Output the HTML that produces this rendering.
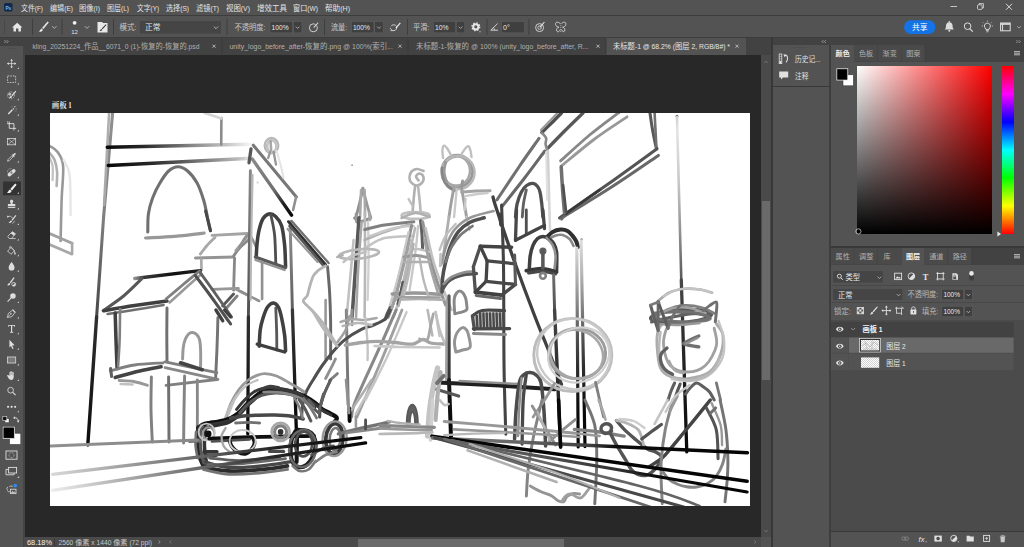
<!DOCTYPE html>
<html lang="zh"><head><meta charset="utf-8"><title>Photoshop</title>
<style>
html,body{margin:0;padding:0;background:#535353;}
body{width:1024px;height:547px;position:relative;overflow:hidden;font-family:"Liberation Sans",sans-serif;}
#ui div{position:absolute;}
svg{position:absolute;left:0;top:0;}
</style></head><body>
<div id="ui">
<div style="left:0px;top:0px;width:1024px;height:547px;background:#535353;"></div>
<div style="left:0px;top:15px;width:1024px;height:1px;background:#3d3d3d;"></div>
<div style="left:0px;top:37px;width:1024px;height:1px;background:#3d3d3d;"></div>
<div style="left:24px;top:38px;width:747px;height:17px;background:#424242;"></div>
<div style="left:24px;top:55px;width:737px;height:482px;background:#282828;"></div>
<div style="left:0px;top:38px;width:24px;height:8px;background:#424242;"></div>
<div style="left:23px;top:46px;width:2px;height:501px;background:#454545;"></div>
<div style="left:24px;top:537px;width:747px;height:10px;background:#4a4a4a;"></div>
<div style="left:761px;top:55px;width:10px;height:482px;background:#4a4a4a;"></div>
<div style="left:761.5px;top:201px;width:8px;height:179px;background:#6a6a6a;"></div>
<div style="left:357.5px;top:538.5px;width:206px;height:8px;background:#6a6a6a;"></div>
<div style="left:770.5px;top:38px;width:2.5px;height:509px;background:#383838;"></div>
<div style="left:773px;top:38px;width:56px;height:7px;background:#424242;"></div>
<div style="left:773px;top:45px;width:56px;height:41px;background:#535353;"></div>
<div style="left:773px;top:86px;width:56px;height:1px;background:#383838;"></div>
<div style="left:773px;top:87px;width:56px;height:460px;background:#535353;"></div>
<div style="left:829.2px;top:45px;width:1.7px;height:502px;background:#3e3e3e;"></div>
<div style="left:829px;top:38px;width:195px;height:7px;background:#424242;"></div>
<div style="left:831px;top:45px;width:193px;height:17px;background:#424242;"></div>
<div style="left:831px;top:62px;width:193px;height:184px;background:#535353;"></div>
<div style="left:831px;top:246px;width:193px;height:2px;background:#383838;"></div>
<div style="left:831px;top:248px;width:193px;height:17px;background:#424242;"></div>
<div style="left:831px;top:265px;width:193px;height:56px;background:#535353;"></div>
<div style="left:831px;top:284.5px;width:193px;height:1px;background:#484848;"></div>
<div style="left:831px;top:301.5px;width:193px;height:1px;background:#484848;"></div>
<div style="left:831px;top:320px;width:193px;height:211px;background:#4b4b4b;"></div>
<div style="left:831px;top:531px;width:193px;height:1px;background:#383838;"></div>
<div style="left:831px;top:532px;width:193px;height:15px;background:#535353;"></div>
<div style="left:761px;top:537px;width:10px;height:10px;background:#535353;"></div>
</div>
<div id="artboard" style="position:absolute;left:50.4px;top:113px;width:699.4px;height:393.2px;background:#fff;overflow:hidden">
<svg width="699.4" height="393.2" viewBox="50.4 113 699.4 393.2" fill="none" stroke-linecap="round" stroke-linejoin="round" style="filter:blur(0.45px)"><defs><linearGradient id="sg0" gradientUnits="userSpaceOnUse" x1="113" y1="113" x2="104" y2="217"><stop offset="0" stop-color="#909090"/><stop offset="1" stop-color="#808080"/></linearGradient><linearGradient id="sg1" gradientUnits="userSpaceOnUse" x1="109.5" y1="113" x2="104.5" y2="205"><stop offset="0" stop-color="#b0b0b0"/><stop offset="1" stop-color="#a8a8a8"/></linearGradient><linearGradient id="sg2" gradientUnits="userSpaceOnUse" x1="104" y1="217" x2="97" y2="317"><stop offset="0" stop-color="#808080"/><stop offset="1" stop-color="#484848"/></linearGradient><linearGradient id="sg3" gradientUnits="userSpaceOnUse" x1="97" y1="317" x2="88.2" y2="445"><stop offset="0" stop-color="#303030"/><stop offset="1" stop-color="#0c0c0c"/></linearGradient><linearGradient id="sg4" gradientUnits="userSpaceOnUse" x1="107.7" y1="147.3" x2="250" y2="144.2"><stop offset="0" stop-color="#080808"/><stop offset="0.25" stop-color="#282828"/><stop offset="0.6" stop-color="#888888"/><stop offset="0.85" stop-color="#c8c8c8"/><stop offset="1" stop-color="#f4f4f4"/></linearGradient><linearGradient id="sg5" gradientUnits="userSpaceOnUse" x1="108.7" y1="165.5" x2="252" y2="158.2"><stop offset="0" stop-color="#080808"/><stop offset="0.3" stop-color="#282828"/><stop offset="0.65" stop-color="#787878"/><stop offset="0.9" stop-color="#b8b8b8"/><stop offset="1" stop-color="#e8e8e8"/></linearGradient><linearGradient id="sg6" gradientUnits="userSpaceOnUse" x1="252.7" y1="159" x2="292" y2="215.2"><stop offset="0" stop-color="#888888"/><stop offset="0.55" stop-color="#707070"/><stop offset="0.8" stop-color="#202020"/><stop offset="1" stop-color="#080808"/></linearGradient><linearGradient id="sg7" gradientUnits="userSpaceOnUse" x1="135.1" y1="278.5" x2="200.7" y2="270.7"><stop offset="0" stop-color="#909090"/><stop offset="0.15" stop-color="#383838"/><stop offset="0.6" stop-color="#101010"/><stop offset="1" stop-color="#202020"/></linearGradient><linearGradient id="sg8" gradientUnits="userSpaceOnUse" x1="250.8" y1="170.7" x2="248.8" y2="317"><stop offset="0" stop-color="#888888"/><stop offset="1" stop-color="#505050"/></linearGradient><linearGradient id="sg9" gradientUnits="userSpaceOnUse" x1="248.8" y1="317" x2="248.2" y2="433.8"><stop offset="0" stop-color="#303030"/><stop offset="1" stop-color="#060606"/></linearGradient><linearGradient id="sg10" gradientUnits="userSpaceOnUse" x1="290.5" y1="221.7" x2="292.8" y2="310"><stop offset="0" stop-color="#909090"/><stop offset="1" stop-color="#606060"/></linearGradient><linearGradient id="sg11" gradientUnits="userSpaceOnUse" x1="292.8" y1="310" x2="296.7" y2="429"><stop offset="0" stop-color="#383838"/><stop offset="1" stop-color="#060606"/></linearGradient><linearGradient id="sg12" gradientUnits="userSpaceOnUse" x1="359.4" y1="217.8" x2="352.5" y2="317"><stop offset="0" stop-color="#585858"/><stop offset="1" stop-color="#585858"/></linearGradient><linearGradient id="sg13" gradientUnits="userSpaceOnUse" x1="346.7" y1="310" x2="348.6" y2="405"><stop offset="0" stop-color="#888888"/><stop offset="1" stop-color="#707070"/></linearGradient><linearGradient id="sg14" gradientUnits="userSpaceOnUse" x1="548.2" y1="151" x2="550.4" y2="230"><stop offset="0" stop-color="#cccccc"/><stop offset="1" stop-color="#d8d8d8"/></linearGradient><linearGradient id="sg15" gradientUnits="userSpaceOnUse" x1="677.4" y1="117" x2="681.7" y2="280"><stop offset="0" stop-color="#d0d0d0"/><stop offset="0.08" stop-color="#e4e4e4"/><stop offset="0.4" stop-color="#c8c8c8"/><stop offset="0.75" stop-color="#888888"/><stop offset="1" stop-color="#585858"/></linearGradient><linearGradient id="sg16" gradientUnits="userSpaceOnUse" x1="681.7" y1="280" x2="687.2" y2="451.9"><stop offset="0" stop-color="#484848"/><stop offset="0.5" stop-color="#202020"/><stop offset="1" stop-color="#080808"/></linearGradient><linearGradient id="sg17" gradientUnits="userSpaceOnUse" x1="577.2" y1="248" x2="578.6" y2="447"><stop offset="0" stop-color="#d8d8d8"/><stop offset="0.15" stop-color="#b0b0b0"/><stop offset="0.3" stop-color="#808080"/><stop offset="0.45" stop-color="#505050"/><stop offset="0.6" stop-color="#2c2c2c"/><stop offset="0.8" stop-color="#0c0c0c"/><stop offset="1" stop-color="#040404"/></linearGradient><linearGradient id="sg18" gradientUnits="userSpaceOnUse" x1="581.5" y1="242" x2="585.4" y2="446.6"><stop offset="0" stop-color="#dcdcdc"/><stop offset="0.15" stop-color="#b8b8b8"/><stop offset="0.3" stop-color="#888888"/><stop offset="0.45" stop-color="#585858"/><stop offset="0.6" stop-color="#303030"/><stop offset="0.8" stop-color="#0c0c0c"/><stop offset="1" stop-color="#040404"/></linearGradient><linearGradient id="sg19" gradientUnits="userSpaceOnUse" x1="554" y1="275" x2="555" y2="310"><stop offset="0" stop-color="#707070"/><stop offset="1" stop-color="#505050"/></linearGradient><linearGradient id="sg20" gradientUnits="userSpaceOnUse" x1="555" y1="310" x2="561" y2="447"><stop offset="0" stop-color="#444444"/><stop offset="0.6" stop-color="#282828"/><stop offset="1" stop-color="#080808"/></linearGradient><linearGradient id="sg21" gradientUnits="userSpaceOnUse" x1="449.4" y1="296" x2="449.4" y2="380"><stop offset="0" stop-color="#585858"/><stop offset="1" stop-color="#303030"/></linearGradient><linearGradient id="sg22" gradientUnits="userSpaceOnUse" x1="449.4" y1="380" x2="451.4" y2="437"><stop offset="0" stop-color="#181818"/><stop offset="1" stop-color="#060606"/></linearGradient><linearGradient id="sg23" gradientUnits="userSpaceOnUse" x1="51" y1="446" x2="198" y2="440"><stop offset="0" stop-color="#909090"/><stop offset="1" stop-color="#888888"/></linearGradient><linearGradient id="sg24" gradientUnits="userSpaceOnUse" x1="53" y1="474.4" x2="361.2" y2="437.7"><stop offset="0" stop-color="#d8d8d8"/><stop offset="0.3" stop-color="#909090"/><stop offset="0.5" stop-color="#606060"/><stop offset="0.72" stop-color="#242424"/><stop offset="1" stop-color="#060606"/></linearGradient><linearGradient id="sg25" gradientUnits="userSpaceOnUse" x1="53" y1="490.4" x2="366" y2="443"><stop offset="0" stop-color="#ececec"/><stop offset="0.25" stop-color="#a8a8a8"/><stop offset="0.5" stop-color="#606060"/><stop offset="0.72" stop-color="#242424"/><stop offset="1" stop-color="#060606"/></linearGradient><linearGradient id="sg26" gradientUnits="userSpaceOnUse" x1="433" y1="438" x2="747.9" y2="452.8"><stop offset="0" stop-color="#888888"/><stop offset="0.3" stop-color="#606060"/><stop offset="0.5" stop-color="#404040"/><stop offset="0.58" stop-color="#0c0c0c"/><stop offset="1" stop-color="#040404"/></linearGradient><linearGradient id="sg27" gradientUnits="userSpaceOnUse" x1="432.4" y1="436.2" x2="747.5" y2="481.2"><stop offset="0" stop-color="#040404"/><stop offset="1" stop-color="#040404"/></linearGradient><linearGradient id="sg28" gradientUnits="userSpaceOnUse" x1="433" y1="437.6" x2="747.5" y2="492"><stop offset="0" stop-color="#707070"/><stop offset="0.4" stop-color="#4c4c4c"/><stop offset="0.6" stop-color="#303030"/><stop offset="0.72" stop-color="#080808"/><stop offset="1" stop-color="#040404"/></linearGradient></defs><path d="M50.0 146.0C51.3 147.0 55.8 148.7 58.0 152.0C60.2 155.3 62.8 158.0 63.5 166.0C64.2 174.0 62.4 187.5 62.0 200.0C61.6 212.5 61.2 234.2 61.0 241.0" stroke="#989898" stroke-width="2.60"/>
<path d="M50.0 153.0C50.8 154.2 53.8 156.8 55.0 160.0C56.2 163.2 57.2 167.7 57.5 172.0C57.8 176.3 57.1 183.7 57.0 186.0" stroke="#b0b0b0" stroke-width="2.60"/>
<path d="M50.0 158.0C50.5 159.3 52.5 162.3 53.0 166.0C53.5 169.7 53.0 177.7 53.0 180.0" stroke="#c4c4c4" stroke-width="2.36"/>
<path d="M64.0 160.0C65.0 162.5 68.8 165.8 70.0 175.0C71.2 184.2 70.8 208.3 71.0 215.0" stroke="#e6e6e6" stroke-width="2.36"/>
<path d="M50.0 233.5L72.5 243.3" stroke="#a0a0a0" stroke-width="2.83"/>
<path d="M50.0 244.5L72.0 254.0" stroke="#a8a8a8" stroke-width="2.83"/>
<path d="M72.5 243.0L72.5 254.0" stroke="#a8a8a8" stroke-width="2.60"/>
<path d="M113.0 113.0L104.0 217.0" stroke="url(#sg0)" stroke-width="3.07"/>
<path d="M109.5 113.0L104.5 205.0" stroke="url(#sg1)" stroke-width="2.60"/>
<path d="M104.0 217.0L97.0 317.0" stroke="url(#sg2)" stroke-width="3.07"/>
<path d="M97.0 317.0L88.2 445.0" stroke="url(#sg3)" stroke-width="3.42"/>
<path d="M107.7 147.3L250.0 144.2" stroke="url(#sg4)" stroke-width="3.54"/>
<path d="M108.7 165.5L252.0 158.2" stroke="url(#sg5)" stroke-width="3.54"/>
<path d="M221.8 118.0L221.6 144.6" stroke="#8c8c8c" stroke-width="2.60"/>
<path d="M205.0 113.0L222.0 118.4" stroke="#d4d4d4" stroke-width="2.60"/>
<path d="M148.2 232.0C148.3 229.0 148.0 219.7 148.8 214.0C149.6 208.3 151.1 203.1 153.0 198.0C154.9 192.9 157.3 188.0 160.0 183.5C162.7 179.0 165.9 173.8 169.0 171.0C172.1 168.2 175.3 166.8 178.5 166.8C181.7 166.8 184.8 168.3 188.0 171.0C191.2 173.7 194.8 178.2 197.5 183.0C200.2 187.8 202.2 194.2 204.0 200.0C205.8 205.8 206.9 212.9 208.0 218.0C209.1 223.1 210.3 228.4 210.8 230.5" stroke="#707070" stroke-width="3.07"/>
<path d="M206.0 211.0L210.9 230.8" stroke="#484848" stroke-width="3.07"/>
<path d="M145.9 238.0C150.8 237.7 165.2 237.2 175.0 236.4C184.8 235.6 199.7 233.7 204.6 233.1" stroke="#989898" stroke-width="3.07"/>
<path d="M253.7 145.2L296.8 197.0" stroke="#787878" stroke-width="3.07"/>
<path d="M252.7 159.0L292.0 215.2" stroke="url(#sg6)" stroke-width="3.30"/>
<path d="M296.5 197.0L293.5 210.0" stroke="#909090" stroke-width="2.60"/>
<path d="M251.4 149.0L249.4 162.8" stroke="#585858" stroke-width="3.30"/>
<ellipse cx="271.9" cy="145.6" rx="6.8" ry="7.6" stroke="#b8b8b8" stroke-width="2.36"/>
<ellipse cx="272.2" cy="146.4" rx="4.6" ry="6" stroke="#c4c4c4" stroke-width="2.60"/>
<path d="M271.0 141.0L271.5 150.0" stroke="#a8a8a8" stroke-width="2.60"/>
<path d="M270.5 152.0L268.6 158.0" stroke="#989898" stroke-width="2.36"/>
<path d="M274.0 152.0L276.4 164.5" stroke="#989898" stroke-width="2.36"/>
<path d="M277.0 151.0C277.7 153.3 279.8 160.5 281.0 165.0C282.2 169.5 283.5 175.8 284.0 178.0" stroke="#e4e4e4" stroke-width="2.12"/>
<circle cx="352.5" cy="165.2" r="0.9" fill="#a0a0a0" stroke="none"/>
<circle cx="258" cy="182.5" r="1.2" fill="#e0e0e0" stroke="none"/>
<path d="M212.4 235.4L247.7 233.5" stroke="#a4a4a4" stroke-width="2.83"/>
<path d="M215.4 237.4C214.0 238.8 209.4 243.2 207.0 246.0C204.6 248.8 201.8 252.7 200.7 254.0" stroke="#a8a8a8" stroke-width="2.83"/>
<path d="M195.8 258.0L234.0 257.0" stroke="#949494" stroke-width="2.83"/>
<path d="M250.5 238.5C248.8 240.1 242.8 245.1 240.0 248.0C237.2 250.9 235.0 254.7 234.0 256.0" stroke="#888888" stroke-width="2.83"/>
<path d="M248.0 236.5L236.0 250.5" stroke="#a0a0a0" stroke-width="2.60"/>
<path d="M201.7 259.0L201.9 270.0" stroke="#a8a8a8" stroke-width="2.60"/>
<path d="M235.0 258.0L234.0 290.2" stroke="#888888" stroke-width="2.83"/>
<path d="M212.4 289.3L238.8 288.3" stroke="#989898" stroke-width="2.83"/>
<path d="M236.0 289.0L250.0 296.0" stroke="#989898" stroke-width="2.83"/>
<path d="M234.0 294.0L223.0 306.0" stroke="#585858" stroke-width="2.83"/>
<path d="M237.5 296.0L226.5 308.5" stroke="#808080" stroke-width="2.83"/>
<path d="M240.0 247.0C241.5 244.9 246.0 234.5 248.8 234.5C251.6 234.5 255.3 244.9 256.6 247.0" stroke="#909090" stroke-width="2.60"/>
<path d="M240.0 291.0L259.6 301.0" stroke="#909090" stroke-width="2.60"/>
<path d="M135.1 278.5L200.7 270.7" stroke="url(#sg7)" stroke-width="3.30"/>
<path d="M142.0 278.9C139.0 281.8 130.2 290.9 124.0 296.0C117.8 301.1 108.0 307.5 104.8 309.8" stroke="#585858" stroke-width="3.07"/>
<path d="M103.8 310.8C109.0 309.9 124.4 307.2 135.0 305.6C145.6 304.0 162.0 301.8 167.4 301.0" stroke="#404040" stroke-width="3.54"/>
<path d="M108.0 314.0C113.3 313.2 130.7 310.5 140.0 309.0C149.3 307.5 160.0 305.7 164.0 305.0" stroke="#707070" stroke-width="2.60"/>
<path d="M200.0 271.0C197.2 273.3 188.6 280.3 183.0 285.0C177.4 289.7 169.2 296.7 166.4 299.0" stroke="#808080" stroke-width="2.83"/>
<path d="M202.0 274.0C199.3 276.3 191.3 283.2 186.0 288.0C180.7 292.8 172.7 300.1 170.0 302.5" stroke="#989898" stroke-width="2.60"/>
<path d="M195.8 275.6C198.3 279.0 206.0 289.1 211.0 296.0C216.0 302.9 222.7 312.3 226.0 317.0C229.3 321.7 230.2 322.8 231.0 324.0" stroke="#505050" stroke-width="3.07"/>
<path d="M200.7 272.6C203.2 276.2 210.8 286.6 216.0 294.0C221.2 301.4 229.3 313.2 232.0 317.0" stroke="#606060" stroke-width="2.83"/>
<path d="M115.6 313.0C115.7 317.5 116.1 330.7 116.4 340.0C116.7 349.3 117.3 363.9 117.5 368.7" stroke="#404040" stroke-width="3.54"/>
<path d="M120.5 309.0C120.4 314.2 120.3 330.5 120.0 340.0C119.7 349.5 118.8 361.7 118.5 366.0" stroke="#808080" stroke-width="2.60"/>
<path d="M167.4 308.0C167.4 312.5 167.2 326.0 167.2 335.0C167.2 344.0 167.4 357.4 167.4 361.9" stroke="#707070" stroke-width="2.95"/>
<path d="M218.3 317.8C218.2 322.8 217.8 337.9 217.4 348.0C217.0 358.1 216.2 373.4 216.0 378.5" stroke="#747474" stroke-width="2.95"/>
<path d="M183.0 359.0C183.1 357.2 183.2 351.2 183.6 348.0C184.0 344.8 184.7 341.8 185.6 339.5C186.5 337.2 187.8 335.2 189.0 334.0C190.2 332.8 191.6 332.4 192.9 332.5C194.2 332.6 195.8 333.1 197.0 334.4C198.2 335.6 199.3 337.4 200.0 340.0C200.7 342.6 200.8 345.6 201.0 350.0C201.2 354.4 201.0 363.9 201.0 366.7" stroke="#989898" stroke-width="2.95"/>
<path d="M110.7 370.7C114.8 369.8 126.2 366.3 135.0 365.0C143.8 363.7 158.8 363.2 163.5 362.8" stroke="#808080" stroke-width="2.83"/>
<path d="M115.6 377.5C119.7 376.4 132.3 372.8 140.0 371.0C147.7 369.2 157.9 367.5 161.5 366.8" stroke="#444444" stroke-width="3.54"/>
<path d="M111.0 368.5L112.0 376.5" stroke="#606060" stroke-width="3.07"/>
<path d="M165.5 361.9L217.3 372.6" stroke="#808080" stroke-width="2.83"/>
<path d="M181.0 362.8L202.6 369.7" stroke="#444444" stroke-width="3.54"/>
<path d="M165.5 367.7L218.3 379.5" stroke="#888888" stroke-width="2.83"/>
<path d="M166.4 385.3L217.3 379.5" stroke="#808080" stroke-width="2.83"/>
<path d="M119.5 380.5C121.9 380.7 129.3 380.7 134.0 381.5C138.7 382.3 145.5 384.7 147.8 385.3" stroke="#989898" stroke-width="2.83"/>
<path d="M121.0 384.0L133.0 384.5" stroke="#c0c0c0" stroke-width="2.36"/>
<path d="M151.8 377.0C151.7 382.5 151.2 399.2 151.4 410.0C151.6 420.8 152.5 436.7 152.7 442.0" stroke="#808080" stroke-width="2.95"/>
<path d="M169.0 377.0C169.0 382.5 169.1 399.2 169.2 410.0C169.3 420.8 169.4 436.7 169.4 442.0" stroke="#707070" stroke-width="2.95"/>
<path d="M185.0 376.0C184.9 381.7 184.6 398.8 184.4 410.0C184.2 421.2 184.1 437.5 184.0 443.0" stroke="#848484" stroke-width="2.95"/>
<path d="M197.7 380.0C197.7 385.0 197.8 402.0 197.8 410.0C197.8 418.0 197.7 425.0 197.7 428.0" stroke="#888888" stroke-width="2.83"/>
<path d="M216.3 310.0L223.2 320.8" stroke="#404040" stroke-width="3.30"/>
<path d="M225.0 310.0L231.0 316.8" stroke="#404040" stroke-width="3.30"/>
<path d="M250.8 170.7L248.8 317.0" stroke="url(#sg8)" stroke-width="2.95"/>
<path d="M253.0 175.0C252.8 187.5 251.8 229.2 251.5 250.0C251.2 270.8 251.1 291.7 251.0 300.0" stroke="#b8b8b8" stroke-width="2.12"/>
<path d="M248.8 317.0L248.2 433.8" stroke="url(#sg9)" stroke-width="3.30"/>
<path d="M290.5 221.7L292.8 310.0" stroke="url(#sg10)" stroke-width="2.95"/>
<path d="M292.8 310.0L296.7 429.0" stroke="url(#sg11)" stroke-width="3.30"/>
<path d="M256.6 257.0C256.8 254.7 257.0 247.6 257.5 243.0C258.0 238.4 258.6 233.7 259.6 229.6C260.6 225.5 261.9 221.1 263.5 218.5C265.1 215.9 267.3 214.2 269.4 213.9C271.5 213.6 273.9 214.5 276.0 216.5C278.1 218.5 280.5 220.9 282.0 225.7C283.5 230.4 284.3 238.2 285.0 245.0C285.7 251.8 285.8 263.2 286.0 266.8" stroke="#404040" stroke-width="3.54"/>
<path d="M271.3 215.0C271.9 218.3 274.2 226.9 275.0 235.0C275.8 243.1 276.0 259.0 276.2 263.8" stroke="#505050" stroke-width="2.83"/>
<path d="M255.7 257.0L286.0 267.7" stroke="#585858" stroke-width="3.07"/>
<path d="M256.0 260.0L285.0 270.0" stroke="#909090" stroke-width="2.36"/>
<path d="M262.5 261.9L262.5 299.0" stroke="#909090" stroke-width="2.60"/>
<path d="M259.6 346.2C259.8 343.5 260.0 334.7 260.6 330.0C261.2 325.3 262.3 321.6 263.5 317.8C264.7 314.0 266.2 309.5 268.0 307.0C269.8 304.5 272.2 302.9 274.0 303.0C275.8 303.1 277.7 305.0 279.0 307.5C280.3 310.0 281.0 313.2 282.0 317.8C283.0 322.4 284.3 329.5 285.0 335.0C285.7 340.5 285.8 348.3 286.0 351.0" stroke="#404040" stroke-width="3.54"/>
<path d="M276.2 308.0C276.3 311.7 276.8 323.0 277.0 330.0C277.2 337.0 277.2 346.7 277.2 350.0" stroke="#585858" stroke-width="2.83"/>
<path d="M257.6 344.2L285.0 352.0" stroke="#404040" stroke-width="3.30"/>
<path d="M288.9 221.7L326.0 264.8" stroke="#303030" stroke-width="2.83"/>
<path d="M290.0 226.0L324.0 266.0" stroke="#585858" stroke-width="2.60"/>
<path d="M292.0 221.0L329.0 263.0" stroke="#707070" stroke-width="2.36"/>
<path d="M288.0 229.0L318.0 262.0" stroke="#989898" stroke-width="2.12"/>
<path d="M328.0 266.8C328.3 271.0 329.5 283.1 330.0 292.0C330.5 300.9 330.8 308.8 331.0 320.0C331.2 331.2 331.0 352.5 331.0 359.0" stroke="#686868" stroke-width="2.95"/>
<path d="M326.0 300.0L326.0 359.0" stroke="#989898" stroke-width="2.60"/>
<path d="M326.0 265.8C324.7 266.7 320.1 269.2 318.0 271.0C315.9 272.8 314.7 273.8 313.4 276.5C312.1 279.2 311.0 283.8 310.0 287.0C309.0 290.2 308.6 293.7 307.5 296.0C306.4 298.3 303.2 299.0 303.6 301.0C304.0 303.0 307.6 305.3 310.0 308.0C312.4 310.7 315.3 313.3 318.3 317.0C321.3 320.7 324.8 325.1 328.0 330.0C331.2 334.9 336.2 343.5 337.8 346.2" stroke="#b4b4b4" stroke-width="2.83"/>
<path d="M363.3 188.3C362.8 190.8 361.1 198.2 360.0 203.0C358.9 207.8 357.0 214.7 356.4 217.0" stroke="#909090" stroke-width="2.83"/>
<path d="M363.3 188.3C363.9 190.8 365.7 198.2 367.0 203.0C368.3 207.8 370.3 214.7 371.0 217.0" stroke="#989898" stroke-width="2.83"/>
<path d="M361.5 190.0L360.5 217.0" stroke="#a8a8a8" stroke-width="2.60"/>
<path d="M365.0 190.0L365.5 216.0" stroke="#a8a8a8" stroke-width="2.60"/>
<path d="M355.0 218.0C356.0 218.6 358.3 221.5 361.0 221.5C363.7 221.5 369.3 218.6 371.0 218.0" stroke="#909090" stroke-width="3.07"/>
<path d="M356.5 214.0L357.0 222.0" stroke="#989898" stroke-width="2.83"/>
<path d="M369.5 213.0L370.5 220.0" stroke="#a8a8a8" stroke-width="2.60"/>
<path d="M359.4 217.8L352.5 317.0" stroke="url(#sg12)" stroke-width="3.54"/>
<path d="M365.2 212.0C365.2 220.0 365.5 242.5 365.5 260.0C365.5 277.5 365.1 307.5 365.0 317.0" stroke="#b8b8b8" stroke-width="2.60"/>
<path d="M362.0 222.0C361.4 230.0 359.4 254.2 358.5 270.0C357.6 285.8 356.8 309.2 356.5 317.0" stroke="#a8a8a8" stroke-width="2.60"/>
<path d="M368.5 222.0C368.6 228.3 369.1 247.0 369.0 260.0C368.9 273.0 368.2 293.3 368.0 300.0" stroke="#d0d0d0" stroke-width="2.36"/>
<path d="M354.0 240.0C353.3 247.5 351.2 272.2 350.0 285.0C348.8 297.8 347.5 311.7 347.0 317.0" stroke="#c0c0c0" stroke-width="2.60"/>
<path d="M365.2 229.6C368.5 228.8 376.8 226.3 385.0 225.0C393.2 223.7 409.3 222.2 414.2 221.7" stroke="#808080" stroke-width="3.07"/>
<path d="M365.0 240.0C368.3 238.7 377.2 234.7 385.0 232.0C392.8 229.3 407.5 225.3 412.0 224.0" stroke="#b0b0b0" stroke-width="2.60"/>
<path d="M367.0 247.0C370.0 245.5 377.2 239.8 385.0 238.0C392.8 236.2 409.2 236.3 414.0 236.0" stroke="#c4c4c4" stroke-width="2.60"/>
<path d="M370.0 236.0C374.2 234.7 387.7 229.7 395.0 228.0C402.3 226.3 410.8 226.3 414.0 226.0" stroke="#c8c8c8" stroke-width="2.36"/>
<ellipse cx="359.4" cy="254" rx="20" ry="4.6" stroke="#b8b8b8" stroke-width="2.83" transform="rotate(-6 359.4 254)"/>
<path d="M344.0 262.0C345.3 261.0 348.3 257.7 352.0 256.0C355.7 254.3 363.7 252.7 366.0 252.0" stroke="#c0c0c0" stroke-width="2.60"/>
<path d="M337.8 257.0L343.0 255.3" stroke="#b0b0b0" stroke-width="2.60"/>
<path d="M346.7 310.0L348.6 405.0" stroke="url(#sg13)" stroke-width="2.95"/>
<path d="M349.6 408.0L350.0 421.0" stroke="#080808" stroke-width="3.54"/>
<path d="M352.5 310.0L352.5 325.0" stroke="#909090" stroke-width="2.60"/>
<path d="M419.0 180.5C418.6 179.8 416.4 177.7 416.5 176.5C416.6 175.3 418.3 173.6 419.5 173.5C420.7 173.4 422.9 174.6 423.5 176.0C424.1 177.4 424.1 180.4 423.0 182.0C421.9 183.6 419.1 185.7 417.0 185.5C414.9 185.3 411.5 183.1 410.5 181.0C409.5 178.9 409.9 175.0 411.0 173.0C412.1 171.0 414.8 169.3 417.0 169.0C419.2 168.7 422.8 170.7 424.0 171.0" stroke="#b0b0b0" stroke-width="2.60"/>
<path d="M415.5 186.0C415.2 188.3 414.4 195.7 414.0 200.0C413.6 204.3 413.2 210.0 413.0 212.0" stroke="#b0b0b0" stroke-width="2.60"/>
<path d="M418.5 187.0C418.8 189.2 419.6 196.0 420.0 200.0C420.4 204.0 420.8 209.2 421.0 211.0" stroke="#b8b8b8" stroke-width="2.60"/>
<path d="M409.0 199.0L413.0 206.0" stroke="#c0c0c0" stroke-width="2.36"/>
<ellipse cx="416" cy="215.5" rx="14" ry="3.4" stroke="#c0c0c0" stroke-width="2.60"/>
<path d="M402.0 218.0C404.3 217.2 411.3 213.2 416.0 213.0C420.7 212.8 427.7 216.3 430.0 217.0" stroke="#b0b0b0" stroke-width="2.60"/>
<path d="M412.0 225.7C410.7 231.8 406.7 250.3 404.0 262.0C401.3 273.7 398.6 286.8 396.0 296.0C393.4 305.2 389.9 313.5 388.7 317.0" stroke="#909090" stroke-width="3.07"/>
<path d="M415.5 228.0C414.2 233.7 410.5 250.7 408.0 262.0C405.5 273.3 402.8 286.8 400.5 296.0C398.2 305.2 395.1 313.5 394.0 317.0" stroke="#b8b8b8" stroke-width="2.60"/>
<path d="M409.0 232.0C407.3 239.2 402.3 262.0 399.0 275.0C395.7 288.0 390.7 304.2 389.0 310.0" stroke="#c8c8c8" stroke-width="2.36"/>
<path d="M421.0 220.8C421.2 223.2 422.1 230.3 422.4 235.0C422.7 239.7 422.9 246.7 423.0 249.0" stroke="#606060" stroke-width="3.07"/>
<path d="M423.0 221.7C424.2 227.2 427.7 245.3 430.0 255.0C432.3 264.7 434.3 271.7 437.0 280.0C439.7 288.3 444.5 300.8 446.0 305.0" stroke="#949494" stroke-width="3.07"/>
<path d="M426.0 228.0C427.3 233.7 431.0 251.7 434.0 262.0C437.0 272.3 441.0 282.0 444.0 290.0C447.0 298.0 450.7 306.7 452.0 310.0" stroke="#c0c0c0" stroke-width="2.60"/>
<path d="M418.5 226.0C418.1 230.0 417.4 239.3 416.0 250.0C414.6 260.7 411.0 283.3 410.0 290.0" stroke="#c8c8c8" stroke-width="2.36"/>
<path d="M404.4 257.0C406.5 256.8 412.7 255.3 417.0 255.5C421.3 255.7 427.8 257.6 430.0 258.0" stroke="#989898" stroke-width="3.07"/>
<path d="M406.0 251.0C408.0 250.7 414.0 248.8 418.0 249.0C422.0 249.2 428.0 251.5 430.0 252.0" stroke="#c0c0c0" stroke-width="2.36"/>
<path d="M392.6 294.0C396.3 293.8 406.8 292.9 415.0 293.0C423.2 293.1 437.5 294.2 442.0 294.5" stroke="#989898" stroke-width="3.54"/>
<path d="M394.0 300.0C398.3 299.8 411.7 299.0 420.0 299.0C428.3 299.0 440.0 299.8 444.0 300.0" stroke="#b0b0b0" stroke-width="2.60"/>
<path d="M403.4 282.4C403.0 284.3 401.8 290.4 401.0 294.0C400.2 297.6 398.9 302.3 398.5 304.0" stroke="#585858" stroke-width="3.30"/>
<path d="M390.7 307.8C390.2 308.7 388.8 311.2 388.0 313.0C387.2 314.8 386.2 317.8 385.8 318.8" stroke="#585858" stroke-width="3.30"/>
<path d="M396.6 310.0C393.5 317.0 384.9 336.7 378.0 352.0C371.1 367.3 359.8 391.2 355.5 402.0C351.2 412.8 352.6 414.5 352.0 417.0" stroke="#888888" stroke-width="3.07"/>
<path d="M402.4 310.0C399.0 318.3 389.5 342.2 382.0 360.0C374.5 377.8 361.5 407.5 357.4 417.0" stroke="#a0a0a0" stroke-width="2.83"/>
<path d="M407.0 312.0C403.8 319.3 394.8 341.3 388.0 356.0C381.2 370.7 369.7 392.7 366.0 400.0" stroke="#c8c8c8" stroke-width="2.36"/>
<path d="M428.0 310.0L432.8 335.4" stroke="#b8b8b8" stroke-width="2.60"/>
<path d="M436.0 312.0L440.0 336.0" stroke="#c4c4c4" stroke-width="2.60"/>
<path d="M410.0 240.0C408.8 245.0 405.5 260.0 403.0 270.0C400.5 280.0 397.5 292.0 395.0 300.0C392.5 308.0 389.2 315.0 388.0 318.0" stroke="#a0a0a0" stroke-width="2.60"/>
<path d="M414.0 244.0C412.8 249.3 409.5 265.7 407.0 276.0C404.5 286.3 400.3 301.0 399.0 306.0" stroke="#b0b0b0" stroke-width="2.36"/>
<path d="M425.0 240.0C426.0 244.7 428.8 259.3 431.0 268.0C433.2 276.7 436.8 288.0 438.0 292.0" stroke="#a4a4a4" stroke-width="2.60"/>
<path d="M420.0 258.0C420.7 261.7 422.3 273.0 424.0 280.0C425.7 287.0 429.0 296.7 430.0 300.0" stroke="#b8b8b8" stroke-width="2.36"/>
<path d="M412.0 258.0C411.3 261.7 409.3 273.7 408.0 280.0C406.7 286.3 404.7 293.3 404.0 296.0" stroke="#b8b8b8" stroke-width="2.36"/>
<path d="M404.0 262.0L430.0 262.0" stroke="#b0b0b0" stroke-width="2.36"/>
<path d="M396.0 297.0L440.0 297.5" stroke="#a0a0a0" stroke-width="2.60"/>
<path d="M390.7 310.0C389.9 311.5 388.6 316.3 385.8 318.8C383.0 321.3 378.1 323.2 374.0 325.0C369.9 326.8 366.0 327.2 361.3 329.6C356.6 332.0 350.2 335.8 345.7 339.4C341.1 343.0 337.8 346.7 334.0 351.0C330.2 355.3 326.3 360.4 323.0 365.0C319.7 369.6 317.1 374.0 314.4 378.5C311.6 383.0 308.4 387.8 306.5 392.2C304.6 396.6 303.8 400.9 303.0 405.0C302.2 409.1 302.2 415.0 302.0 417.0" stroke="#505050" stroke-width="3.07"/>
<path d="M312.4 310.0C314.3 313.2 319.8 323.0 324.0 329.0C328.2 335.0 335.5 343.3 337.8 346.2" stroke="#b8b8b8" stroke-width="2.60"/>
<path d="M341.0 322.0C342.8 321.5 348.0 319.3 352.0 319.0C356.0 318.7 360.8 320.2 365.0 320.0C369.2 319.8 375.0 318.3 377.0 318.0" stroke="#a8a8a8" stroke-width="2.60"/>
<path d="M343.0 326.0C345.5 325.5 353.2 323.2 358.0 323.0C362.8 322.8 369.7 324.7 372.0 325.0" stroke="#b8b8b8" stroke-width="2.60"/>
<path d="M350.0 316.0C349.3 318.3 348.0 325.7 346.0 330.0C344.0 334.3 339.3 340.0 338.0 342.0" stroke="#a0a0a0" stroke-width="2.60"/>
<path d="M366.0 318.0C366.3 322.5 367.7 338.0 368.0 345.0C368.3 352.0 368.0 357.5 368.0 360.0" stroke="#c4c4c4" stroke-width="2.36"/>
<path d="M345.7 345.2C348.4 344.8 356.8 343.1 362.0 342.5C367.2 341.9 371.5 341.3 377.0 341.3C382.5 341.3 389.1 342.0 395.0 342.5C400.9 343.0 408.4 344.3 412.2 344.2C416.0 344.1 416.0 342.8 418.0 342.0C420.0 341.2 421.8 339.2 424.0 339.4C426.2 339.6 427.8 342.2 431.0 343.0C434.2 343.8 441.4 343.8 443.5 344.0" stroke="#a4a4a4" stroke-width="3.30"/>
<path d="M375.0 346.0C379.2 346.2 389.2 346.8 400.0 347.0C410.8 347.2 433.3 347.4 440.0 347.5" stroke="#c8c8c8" stroke-width="2.60"/>
<path d="M335.9 359.0C335.1 360.7 332.6 365.8 331.0 369.0C329.4 372.2 326.8 376.9 326.0 378.5" stroke="#909090" stroke-width="2.83"/>
<path d="M337.8 373.6L330.0 380.5" stroke="#808080" stroke-width="2.83"/>
<path d="M324.0 394.0C323.5 395.8 321.7 401.2 321.0 405.0C320.3 408.8 320.2 415.0 320.0 417.0" stroke="#505050" stroke-width="3.07"/>
<path d="M331.0 380.0C330.0 382.2 326.7 388.8 325.0 393.0C323.3 397.2 322.0 402.1 321.0 405.4C320.0 408.7 319.3 411.7 319.0 413.0" stroke="#606060" stroke-width="2.83"/>
<path d="M420.0 339.0C421.3 339.1 426.0 341.6 427.8 339.4C429.6 337.2 430.0 330.2 431.0 326.0C432.0 321.8 433.2 316.0 433.7 314.0" stroke="#a8a8a8" stroke-width="2.83"/>
<path d="M436.0 312.0C436.7 315.0 438.3 324.5 440.0 330.0C441.7 335.5 445.0 342.5 446.0 345.0" stroke="#c0c0c0" stroke-width="2.60"/>
<ellipse cx="457.6" cy="171.2" rx="15.4" ry="16" stroke="#989898" stroke-width="2.83"/>
<ellipse cx="457" cy="171" rx="13.4" ry="14.6" stroke="#a8a8a8" stroke-width="2.60" transform="rotate(8 457 171)"/>
<ellipse cx="458.6" cy="172.4" rx="16.4" ry="16.8" stroke="#b8b8b8" stroke-width="2.36" transform="rotate(-10 458.6 172.4)"/>
<path d="M442.6 168.0C442.8 169.7 442.7 175.0 443.6 178.0C444.5 181.0 446.1 183.9 448.0 186.0C449.9 188.1 453.8 189.8 455.0 190.5" stroke="#848484" stroke-width="3.07"/>
<path d="M446.0 162.0C445.8 163.7 444.4 168.7 444.6 172.0C444.8 175.3 446.6 180.3 447.0 182.0" stroke="#989898" stroke-width="2.60"/>
<path d="M443.5 158.0C443.4 156.7 442.6 152.1 442.8 150.0C443.0 147.9 443.6 145.8 444.5 145.6C445.4 145.4 446.9 147.4 448.0 149.0C449.1 150.6 450.8 154.0 451.3 155.0" stroke="#c0c0c0" stroke-width="2.36"/>
<path d="M462.0 154.0C462.7 153.0 464.8 149.3 466.0 148.0C467.2 146.7 468.2 145.7 469.0 146.2C469.8 146.7 470.5 149.2 471.0 151.0C471.5 152.8 471.8 156.0 471.9 157.0" stroke="#c0c0c0" stroke-width="2.36"/>
<path d="M454.2 188.3C453.8 190.8 452.3 198.2 451.5 203.0C450.7 207.8 449.8 214.7 449.4 217.0" stroke="#a0a0a0" stroke-width="2.95"/>
<path d="M457.0 190.0L454.5 217.0" stroke="#c8c8c8" stroke-width="2.36"/>
<path d="M462.0 188.3C462.4 190.8 463.8 198.2 464.6 203.0C465.4 207.8 466.6 214.7 467.0 217.0" stroke="#a0a0a0" stroke-width="2.95"/>
<path d="M463.0 181.0L462.0 187.0" stroke="#989898" stroke-width="2.83"/>
<path d="M462.0 192.0C464.3 191.8 471.2 191.2 476.0 191.0C480.8 190.8 488.1 190.8 490.5 190.8" stroke="#a4a4a4" stroke-width="2.95"/>
<path d="M466.0 196.0C468.0 195.7 474.3 194.5 478.0 194.0C481.7 193.5 486.3 193.2 488.0 193.0" stroke="#cccccc" stroke-width="2.36"/>
<path d="M466.0 199.0L465.0 210.0" stroke="#c8c8c8" stroke-width="2.36"/>
<path d="M449.4 217.0C448.8 220.8 447.1 232.5 446.0 240.0C444.9 247.5 443.5 258.3 443.0 262.0" stroke="#b0b0b0" stroke-width="2.83"/>
<path d="M467.0 217.0L470.0 230.0" stroke="#c8c8c8" stroke-width="2.36"/>
<path d="M561.9 113.0C560.2 114.7 555.3 119.8 552.0 123.0C548.7 126.2 543.9 130.9 542.3 132.5" stroke="#505050" stroke-width="3.30"/>
<path d="M558.0 113.0L541.5 130.0" stroke="#989898" stroke-width="2.36"/>
<path d="M539.4 138.4C536.2 143.0 527.0 155.7 520.0 166.0C513.0 176.3 501.1 194.3 497.3 200.0" stroke="#707070" stroke-width="3.07"/>
<path d="M583.4 113.0C580.3 116.0 570.9 125.1 565.0 131.0C559.1 136.9 551.0 145.3 548.2 148.2" stroke="#585858" stroke-width="3.30"/>
<path d="M545.2 151.0C541.8 155.5 532.2 168.7 525.0 178.0C517.8 187.3 506.0 202.1 502.2 206.9" stroke="#686868" stroke-width="3.07"/>
<path d="M542.5 133.0C543.2 133.8 545.9 136.2 546.5 138.0C547.1 139.8 545.8 142.0 546.0 144.0C546.2 146.0 547.3 149.0 547.6 150.0" stroke="#888888" stroke-width="2.60"/>
<path d="M493.4 197.0C494.0 199.2 493.7 199.2 497.3 210.0C500.9 220.8 508.6 244.2 515.0 262.0C521.4 279.8 530.0 302.7 535.5 317.0C541.0 331.3 543.6 336.8 548.0 348.0C552.4 359.2 559.6 378.3 561.9 384.4" stroke="#404040" stroke-width="3.30"/>
<path d="M502.0 205.0C502.3 214.2 503.4 241.3 503.8 260.0C504.2 278.7 504.1 298.7 504.2 317.0C504.3 335.3 504.2 350.5 504.5 370.0C504.8 389.5 505.9 423.5 506.2 434.2" stroke="#444444" stroke-width="3.07"/>
<path d="M500.0 214.0L501.0 225.0" stroke="#404040" stroke-width="2.83"/>
<path d="M515.9 217.0C516.2 214.8 516.5 208.2 517.5 204.0C518.5 199.8 520.2 195.1 521.8 192.0C523.4 188.9 525.0 186.9 527.0 185.5C529.0 184.1 531.7 183.2 533.5 183.4C535.3 183.6 536.9 185.1 538.0 186.5C539.1 187.9 539.7 189.1 540.4 192.0C541.1 194.9 541.7 199.8 542.2 204.0C542.7 208.2 543.1 214.8 543.3 217.0" stroke="#505050" stroke-width="3.30"/>
<path d="M526.7 190.0C526.2 192.2 524.7 198.5 524.0 203.0C523.3 207.5 522.9 214.7 522.7 217.0" stroke="#606060" stroke-width="2.83"/>
<path d="M548.2 151.0L550.4 230.0" stroke="url(#sg14)" stroke-width="2.60"/>
<path d="M546.5 152.0L547.5 200.0" stroke="#e0e0e0" stroke-width="1.89"/>
<path d="M516.9 210.0L515.9 240.3" stroke="#484848" stroke-width="3.30"/>
<path d="M526.7 210.0L526.7 234.5" stroke="#505050" stroke-width="2.83"/>
<path d="M543.3 210.0L544.9 228.6" stroke="#484848" stroke-width="3.30"/>
<path d="M515.9 240.3C518.2 239.1 525.2 235.5 530.0 233.0C534.8 230.5 542.4 226.7 544.9 225.4" stroke="#444444" stroke-width="3.30"/>
<circle cx="544.6" cy="226.6" r="1.8" fill="#404040" stroke="none"/>
<path d="M561.0 160.9C565.8 156.6 580.7 142.8 590.0 135.0C599.3 127.2 612.0 118.0 616.8 114.3C621.6 110.6 618.6 113.2 619.0 113.0" stroke="#888888" stroke-width="2.83"/>
<path d="M562.0 165.8C567.5 161.3 584.1 147.2 595.0 139.0C605.9 130.8 622.1 120.5 627.5 116.8" stroke="#989898" stroke-width="2.83"/>
<path d="M650.4 113.0C650.8 115.8 651.9 124.0 653.0 130.0C654.1 136.0 656.2 145.9 656.9 149.1" stroke="#585858" stroke-width="3.07"/>
<path d="M655.0 113.0L656.9 149.0" stroke="#707070" stroke-width="2.60"/>
<path d="M657.5 148.7C649.6 154.4 625.3 172.2 610.0 183.0C594.7 193.8 574.2 207.9 565.9 213.7C557.6 219.5 561.0 217.3 560.0 218.0" stroke="#545454" stroke-width="3.07"/>
<path d="M658.8 155.4C651.0 160.7 627.0 177.3 612.0 187.0C597.0 196.7 577.1 208.4 568.8 213.7C560.5 219.0 563.1 218.1 562.0 219.0" stroke="#686868" stroke-width="3.07"/>
<path d="M600.0 190.0C596.7 192.3 585.7 200.0 580.0 204.0C574.3 208.0 568.3 212.3 566.0 214.0" stroke="#383838" stroke-width="2.60"/>
<path d="M561.6 166.8C561.8 170.7 562.5 182.3 563.0 190.0C563.5 197.7 564.6 208.9 564.9 212.7" stroke="#707070" stroke-width="3.54"/>
<path d="M563.5 185.0L566.5 212.0" stroke="#505050" stroke-width="2.60"/>
<circle cx="677.4" cy="116.2" r="1.4" fill="#707070" stroke="none"/>
<path d="M677.4 117.0L681.7 280.0" stroke="url(#sg15)" stroke-width="2.60"/>
<path d="M681.7 280.0L687.2 451.9" stroke="url(#sg16)" stroke-width="3.30"/>
<path d="M547.2 237.4C548.2 236.5 550.7 233.3 553.0 232.0C555.3 230.7 558.5 229.8 561.0 229.6C563.5 229.4 566.1 230.0 568.0 231.0C569.9 232.0 571.2 233.7 572.6 235.4C574.0 237.1 575.5 239.0 576.5 241.0C577.5 243.0 578.2 246.2 578.5 247.2" stroke="#303030" stroke-width="4.01"/>
<path d="M549.0 239.0C550.2 238.4 553.7 236.2 556.0 235.5C558.3 234.8 560.7 234.4 563.0 235.0C565.3 235.6 568.2 237.2 570.0 239.0C571.8 240.8 573.3 244.8 574.0 246.0" stroke="#888888" stroke-width="2.60"/>
<path d="M529.6 270.7C529.8 268.2 530.0 260.2 530.6 256.0C531.2 251.8 532.3 248.1 533.5 245.2C534.7 242.3 536.4 240.0 538.0 238.5C539.6 237.0 541.5 236.4 543.3 236.4C545.1 236.4 547.2 237.3 549.0 238.5C550.8 239.7 552.7 241.2 554.0 243.5C555.3 245.8 556.5 247.5 557.0 252.0C557.5 256.5 557.0 267.6 557.0 270.7" stroke="#404040" stroke-width="3.54"/>
<path d="M547.0 238.0C548.0 239.2 551.5 242.0 553.0 245.0C554.5 248.0 555.8 251.5 556.0 256.0C556.2 260.5 554.8 269.3 554.5 272.0" stroke="#909090" stroke-width="2.60"/>
<path d="M526.7 270.7C529.2 270.4 537.0 268.4 542.0 268.6C547.0 268.8 554.5 271.4 557.0 272.0" stroke="#383838" stroke-width="3.78"/>
<path d="M529.0 273.0C531.3 272.7 538.5 271.2 543.0 271.4C547.5 271.6 553.8 273.6 556.0 274.0" stroke="#484848" stroke-width="3.07"/>
<circle cx="543.3" cy="251" r="3.6" fill="#606060" stroke="none"/>
<path d="M543.3 251.0L543.3 268.0" stroke="#585858" stroke-width="3.54"/>
<ellipse cx="543.3" cy="275.8" rx="2.9" ry="2.9" stroke="#808080" stroke-width="2.60"/>
<circle cx="582" cy="239.4" r="1.4" fill="#b4b4b4" stroke="none"/>
<path d="M577.2 248.0L578.6 447.0" stroke="url(#sg17)" stroke-width="3.19"/>
<path d="M581.5 242.0L585.4 446.6" stroke="url(#sg18)" stroke-width="3.19"/>
<path d="M554.0 275.0L555.0 310.0" stroke="url(#sg19)" stroke-width="2.95"/>
<path d="M555.0 310.0L561.0 447.0" stroke="url(#sg20)" stroke-width="3.42"/>
<path d="M442.5 292.0C442.6 289.7 442.5 282.5 443.0 278.0C443.5 273.5 444.1 270.1 445.4 264.8C446.7 259.5 448.7 251.6 451.0 246.0C453.3 240.4 455.8 235.4 459.0 231.5C462.2 227.6 465.7 224.8 470.0 222.5C474.3 220.2 482.2 218.6 484.6 217.8" stroke="#505050" stroke-width="3.54"/>
<path d="M441.5 264.8C442.4 261.5 444.8 250.9 447.0 245.0C449.2 239.1 451.2 234.1 455.0 229.6C458.8 225.1 463.5 221.1 470.0 218.0C476.5 214.9 490.0 212.2 494.0 211.0" stroke="#989898" stroke-width="2.60"/>
<path d="M440.0 250.0C441.0 247.7 443.3 240.3 446.0 236.0C448.7 231.7 454.3 226.0 456.0 224.0" stroke="#c0c0c0" stroke-width="2.36"/>
<path d="M446.0 262.0C447.0 259.5 449.5 251.5 452.0 247.0C454.5 242.5 457.5 238.5 461.0 235.0C464.5 231.5 471.0 227.5 473.0 226.0" stroke="#787878" stroke-width="2.60"/>
<path d="M443.5 288.3C444.2 287.2 446.1 283.8 448.0 282.0C449.9 280.2 452.2 278.8 455.0 277.5C457.8 276.2 461.4 275.1 465.0 274.5C468.6 273.9 474.8 273.8 476.8 273.6" stroke="#545454" stroke-width="3.54"/>
<path d="M444.0 284.0C445.3 282.8 448.7 278.9 452.0 277.0C455.3 275.1 460.3 273.4 464.0 272.5C467.7 271.6 472.3 271.7 474.0 271.5" stroke="#909090" stroke-width="2.60"/>
<path d="M441.0 254.0L440.5 266.0" stroke="#c0c0c0" stroke-width="2.60"/>
<path d="M455.2 313.7C455.1 312.2 454.7 307.6 454.6 305.0C454.5 302.4 454.4 300.0 454.8 298.0C455.2 296.0 456.1 294.2 457.0 293.0C457.9 291.8 458.9 291.0 460.0 291.0C461.1 291.0 462.4 291.8 463.4 293.0C464.4 294.2 465.4 296.2 466.0 298.0C466.6 299.8 466.8 302.0 467.0 304.0C467.2 306.0 468.0 308.4 467.0 309.8C466.0 311.2 463.0 311.8 461.0 312.4C459.0 313.0 456.2 313.5 455.2 313.7" stroke="#888888" stroke-width="2.95"/>
<path d="M456.2 352.0C456.0 350.8 455.2 347.1 455.0 345.0C454.8 342.9 454.8 341.5 455.2 339.4C455.6 337.3 456.3 334.5 457.6 332.5C458.9 330.5 461.4 328.0 463.0 327.6C464.6 327.2 466.0 328.7 467.0 330.0C468.0 331.3 468.4 332.5 469.0 335.4C469.6 338.3 471.5 344.8 470.5 347.2C469.5 349.6 465.4 349.2 463.0 350.0C460.6 350.8 457.3 351.7 456.2 352.0" stroke="#949494" stroke-width="2.95"/>
<path d="M480.7 246.2L512.0 247.2" stroke="#444444" stroke-width="3.54"/>
<path d="M480.7 246.2L473.8 266.8" stroke="#505050" stroke-width="3.30"/>
<path d="M480.7 246.2L487.5 260.9" stroke="#444444" stroke-width="3.30"/>
<path d="M487.5 260.9L515.9 263.8" stroke="#484848" stroke-width="3.30"/>
<path d="M487.5 260.9L486.5 281.4" stroke="#444444" stroke-width="3.30"/>
<path d="M473.8 266.8L475.8 292.2" stroke="#505050" stroke-width="3.30"/>
<path d="M486.5 281.4L475.8 292.2" stroke="#444444" stroke-width="3.30"/>
<path d="M486.5 281.4L515.9 284.4" stroke="#484848" stroke-width="3.30"/>
<path d="M475.8 292.2L502.2 295.1" stroke="#404040" stroke-width="3.78"/>
<path d="M502.2 295.1L515.9 284.4" stroke="#484848" stroke-width="3.30"/>
<path d="M515.0 255.0L515.9 284.4" stroke="#585858" stroke-width="3.07"/>
<path d="M476.5 295.5L501.0 298.5" stroke="#686868" stroke-width="2.83"/>
<path d="M474.5 316.5L482.6 311L505 311V328.4L475.6 329.6Z" fill="#8c8c8c" stroke="none" opacity="0.55"/>
<path d="M477.2 316.0L477.8 328.0" stroke="#484848" stroke-width="2.36"/>
<path d="M480.5 313.4L481.1 328.0" stroke="#484848" stroke-width="2.36"/>
<path d="M483.8 313.4L484.4 328.0" stroke="#484848" stroke-width="2.36"/>
<path d="M487.1 313.4L487.7 328.0" stroke="#484848" stroke-width="2.36"/>
<path d="M490.4 313.4L491.0 328.0" stroke="#484848" stroke-width="2.36"/>
<path d="M493.7 313.4L494.3 328.0" stroke="#484848" stroke-width="2.36"/>
<path d="M497.0 313.4L497.6 328.0" stroke="#484848" stroke-width="2.36"/>
<path d="M500.3 313.4L500.9 328.0" stroke="#484848" stroke-width="2.36"/>
<path d="M503.6 313.4L504.2 328.0" stroke="#484848" stroke-width="2.36"/>
<path d="M472.8 316.0C474.4 315.1 477.2 311.3 482.6 310.4C488.0 309.5 501.3 310.6 505.0 310.6" stroke="#484848" stroke-width="3.07"/>
<path d="M472.8 316.0L474.8 329.6" stroke="#505050" stroke-width="3.30"/>
<path d="M473.8 328.8L510.0 328.6" stroke="#484848" stroke-width="3.30"/>
<path d="M473.8 333.5L506.0 334.5" stroke="#888888" stroke-width="2.83"/>
<path d="M449.4 296.0L449.4 380.0" stroke="url(#sg21)" stroke-width="3.30"/>
<path d="M449.4 380.0L451.4 437.0" stroke="url(#sg22)" stroke-width="4.01"/>
<path d="M447.0 300.0L446.5 380.0" stroke="#a0a0a0" stroke-width="2.12"/>
<path d="M437.6 382.4C448.0 382.9 480.4 384.5 500.0 385.6C519.6 386.8 545.8 388.7 555.0 389.3" stroke="#202020" stroke-width="4.01"/>
<path d="M460.0 381.0L520.0 384.0" stroke="#909090" stroke-width="2.36"/>
<path d="M436.6 389.3L459.0 396.0" stroke="#585858" stroke-width="3.30"/>
<path d="M438.0 368.0C437.3 370.8 435.3 378.0 434.0 385.0C432.7 392.0 431.0 401.5 430.0 410.0C429.0 418.5 428.3 431.7 428.0 436.0" stroke="#c4c4c4" stroke-width="5.31"/>
<path d="M441.0 372.0C440.5 375.8 438.8 387.0 438.0 395.0C437.2 403.0 436.3 415.8 436.0 420.0" stroke="#b0b0b0" stroke-width="4.13"/>
<path d="M444.0 376.0L437.5 383.0" stroke="#707070" stroke-width="4.01"/>
<path d="M433.0 400.0L431.0 440.0" stroke="#d0d0d0" stroke-width="3.54"/>
<path d="M440.0 400.0C440.8 400.8 443.5 404.3 445.0 405.0C446.5 405.7 448.3 404.2 449.0 404.0" stroke="#c0c0c0" stroke-width="2.60"/>
<path d="M515.0 439.0C515.2 434.2 515.7 419.4 516.5 410.0C517.3 400.6 518.5 388.3 519.8 382.4C521.1 376.5 522.7 376.1 524.5 374.5C526.3 372.9 528.6 372.5 530.6 372.6C532.6 372.7 534.7 373.4 536.5 375.0C538.3 376.6 540.0 376.6 541.3 382.4C542.6 388.2 543.5 399.4 544.3 410.0C545.1 420.6 545.7 440.0 546.0 446.0" stroke="#4c4c4c" stroke-width="3.54"/>
<path d="M526.7 374.6C526.2 378.8 524.3 388.4 523.6 400.0C522.9 411.6 522.7 436.7 522.5 444.0" stroke="#484848" stroke-width="3.30"/>
<path d="M522.0 378.0C521.6 383.3 520.1 400.3 519.5 410.0C518.9 419.7 518.7 431.7 518.5 436.0" stroke="#909090" stroke-width="2.36"/>
<path d="M407 424.5C407 398 418.4 398 418.4 424.5L415.4 424.5C415.4 408 410.4 408 410.2 424.5Z" fill="#606060" stroke="#585858" stroke-width="1.6"/>
<ellipse cx="573.2" cy="355" rx="39" ry="36.6" stroke="#bcbcbc" stroke-width="2.95"/>
<ellipse cx="574.4" cy="354" rx="37" ry="35" stroke="#c8c8c8" stroke-width="2.36" transform="rotate(20 574.4 354)"/>
<ellipse cx="577.5" cy="353.6" rx="28.5" ry="25" stroke="#9c9c9c" stroke-width="2.95"/>
<ellipse cx="577" cy="354.4" rx="27" ry="24" stroke="#a8a8a8" stroke-width="2.60" transform="rotate(25 577 354.4)"/>
<ellipse cx="579" cy="355" rx="31" ry="27" stroke="#d0d0d0" stroke-width="2.12" transform="rotate(-20 579 355)"/>
<path d="M555.0 383.4C553.3 386.2 548.6 394.4 545.0 400.0C541.4 405.6 535.4 414.2 533.5 417.0" stroke="#989898" stroke-width="2.83"/>
<path d="M596.0 382.4C596.7 385.3 598.7 394.2 600.0 400.0C601.3 405.8 603.3 414.2 604.0 417.0" stroke="#808080" stroke-width="2.83"/>
<path d="M542.4 400.0C541.0 406.0 536.3 424.6 534.0 436.0C531.7 447.4 529.9 458.5 528.7 468.5C527.5 478.5 527.1 491.4 526.8 496.0" stroke="#848484" stroke-width="2.95"/>
<path d="M530.7 486.0C532.4 486.9 537.4 489.8 541.0 491.5C544.6 493.2 549.4 494.5 552.2 496.0C555.0 497.5 556.0 499.5 558.0 500.5C560.0 501.5 562.6 502.2 564.0 501.8C565.4 501.4 565.7 499.0 566.4 498.0C567.1 497.0 566.7 496.8 568.0 496.0C569.3 495.2 572.0 493.8 574.0 493.5C576.0 493.2 579.0 493.9 580.0 494.0" stroke="#949494" stroke-width="2.83"/>
<path d="M532.6 406.0C534.5 409.2 540.1 418.5 544.0 425.0C547.9 431.5 554.0 441.7 556.0 445.0" stroke="#909090" stroke-width="2.83"/>
<path d="M575.7 419.6C573.6 421.3 567.3 426.4 563.0 430.0C558.7 433.6 552.2 439.2 550.0 441.0" stroke="#909090" stroke-width="2.83"/>
<path d="M538.0 412.0L550.0 440.0" stroke="#b4b4b4" stroke-width="2.36"/>
<path d="M585.4 400.0C587.0 404.2 593.2 415.6 595.2 425.4C597.2 435.2 597.2 445.6 597.2 458.7C597.2 471.8 595.5 496.2 595.2 503.7" stroke="#747474" stroke-width="2.95"/>
<path d="M599.0 400.0C599.7 401.7 601.8 406.7 603.0 410.0C604.2 413.3 605.5 418.0 606.0 419.6" stroke="#a8a8a8" stroke-width="2.60"/>
<path d="M562.0 501.8C562.7 500.8 564.4 497.3 566.0 496.0C567.6 494.7 569.9 493.8 571.7 494.0C573.5 494.2 575.4 496.4 577.0 497.0C578.6 497.6 579.8 498.6 581.5 497.8C583.2 497.0 585.4 494.0 587.0 492.0C588.6 490.0 590.6 487.0 591.3 486.0" stroke="#a0a0a0" stroke-width="2.83"/>
<path d="M574.7 429.4C578.9 429.8 591.7 430.9 600.0 432.0C608.3 433.1 620.5 435.5 624.6 436.2" stroke="#808080" stroke-width="3.30"/>
<path d="M578.0 433.5L600.0 436.0" stroke="#989898" stroke-width="2.60"/>
<path d="M612.0 431.0C611.0 431.4 607.7 433.8 606.0 433.6C604.3 433.4 602.1 431.4 601.6 430.0C601.1 428.6 601.8 426.2 603.0 425.2C604.2 424.2 607.1 423.6 608.6 424.0C610.1 424.4 611.6 425.9 612.0 427.5C612.4 429.1 610.2 430.4 611.0 433.3C611.8 436.2 614.4 440.4 617.0 445.0C619.6 449.6 624.0 456.5 626.5 460.7C629.0 464.9 630.0 467.7 632.0 470.0C634.0 472.3 636.0 473.5 638.3 474.4C640.6 475.3 643.7 475.8 646.0 475.5C648.3 475.2 650.0 474.0 652.0 472.4C654.0 470.8 656.4 468.6 658.0 466.0C659.6 463.4 662.1 459.1 661.8 456.8C661.5 454.5 658.3 453.3 656.0 452.0C653.7 450.7 651.3 451.1 648.0 449.0C644.7 446.9 639.9 442.8 636.0 439.5C632.1 436.2 627.8 432.6 624.6 429.4C621.4 426.2 618.1 422.0 616.8 420.5" stroke="#545454" stroke-width="3.42"/>
<path d="M616.8 420.5C618.7 421.0 624.4 422.0 628.0 423.5C631.6 425.0 636.0 427.1 638.3 429.4C640.6 431.6 641.0 434.4 642.0 437.0C643.0 439.6 643.7 443.7 644.0 445.0" stroke="#b4b4b4" stroke-width="2.83"/>
<path d="M620.0 419.0C622.3 419.3 629.8 419.5 634.0 421.0C638.2 422.5 643.2 426.8 645.0 428.0" stroke="#cccccc" stroke-width="2.36"/>
<path d="M661.8 424.5C660.2 425.7 655.3 429.1 652.0 431.5C648.7 433.9 643.8 437.8 642.2 439.0" stroke="#545454" stroke-width="3.30"/>
<path d="M716.8 323.9C717.9 325.7 722.6 329.7 723.3 334.8C724.0 339.9 723.2 348.4 721.0 354.6C718.8 360.8 715.5 368.0 710.0 372.0C704.5 376.0 694.8 377.9 688.2 378.7C681.7 379.4 675.3 378.3 670.7 376.5C666.1 374.7 663.0 372.8 660.8 367.7C658.6 362.6 657.9 352.0 657.5 345.8C657.1 339.6 657.5 334.4 658.6 330.4C659.7 326.4 663.1 323.4 664.0 322.0" stroke="#acacac" stroke-width="2.95"/>
<path d="M714.6 328.2C715.0 331.1 718.3 339.6 716.8 345.8C715.3 352.0 710.6 361.1 705.8 365.5C701.0 369.9 694.1 372.0 688.2 372.0C682.4 372.0 674.7 369.9 670.7 365.5C666.7 361.1 664.7 351.7 664.0 345.8C663.3 339.9 665.0 334.4 666.3 330.4C667.6 326.4 671.0 323.4 672.0 322.0" stroke="#a0a0a0" stroke-width="2.83"/>
<path d="M719.0 321.0C719.9 324.2 724.0 333.5 724.5 340.0C725.0 346.5 724.8 354.0 722.0 360.0C719.2 366.0 713.3 372.5 708.0 376.0C702.7 379.5 696.0 380.5 690.0 381.0C684.0 381.5 675.0 379.3 672.0 379.0" stroke="#c4c4c4" stroke-width="2.36"/>
<path d="M661.0 332.0C660.8 335.0 659.1 344.0 659.6 350.0C660.1 356.0 661.3 363.3 664.0 368.0C666.7 372.7 671.0 376.0 676.0 378.0C681.0 380.0 688.0 381.0 694.0 380.0C700.0 379.0 707.7 375.7 712.0 372.0C716.3 368.3 718.7 360.3 720.0 358.0" stroke="#b8b8b8" stroke-width="2.36"/>
<path d="M667.4 348.0C666.6 348.8 663.6 351.0 662.5 352.5C661.4 354.0 661.0 355.1 660.8 356.8C660.6 358.5 660.9 360.7 661.4 362.5C661.9 364.3 662.9 366.2 664.0 367.7C665.1 369.2 666.5 370.4 668.0 371.5C669.5 372.6 672.2 373.8 673.0 374.3" stroke="#606060" stroke-width="3.30"/>
<path d="M669.6 361.0C670.0 361.8 671.1 364.5 672.0 366.0C672.9 367.5 673.8 369.0 675.0 370.0C676.2 371.0 677.5 371.5 679.0 372.0C680.5 372.5 683.1 372.8 683.9 373.0" stroke="#a8a8a8" stroke-width="2.60"/>
<ellipse cx="681.5" cy="316.2" rx="30.6" ry="6.4" stroke="#585858" stroke-width="3.30" transform="rotate(-4 681.5 316.2)"/>
<ellipse cx="682" cy="317" rx="29" ry="4.6" stroke="#787878" stroke-width="2.60" transform="rotate(3 682 317)"/>
<path d="M652.0 322.0C654.7 321.3 661.7 319.3 668.0 318.0C674.3 316.7 682.7 314.8 690.0 314.0C697.3 313.2 708.3 313.6 712.0 313.5" stroke="#606060" stroke-width="3.07"/>
<path d="M655.0 313.0C657.8 312.8 665.5 311.6 672.0 311.5C678.5 311.4 687.7 311.6 694.0 312.5C700.3 313.4 707.3 316.2 710.0 317.0" stroke="#707070" stroke-width="2.83"/>
<path d="M656.0 318.0C658.3 318.7 664.3 321.2 670.0 322.0C675.7 322.8 683.7 323.0 690.0 322.5C696.3 322.0 705.0 319.6 708.0 319.0" stroke="#707070" stroke-width="2.83"/>
<path d="M660.0 324.0C663.3 324.2 673.3 325.2 680.0 325.0C686.7 324.8 696.7 323.3 700.0 323.0" stroke="#989898" stroke-width="2.36"/>
<path d="M657.8 301.5C659.8 300.0 665.4 294.6 670.0 292.5C674.6 290.4 680.2 289.3 685.2 288.8C690.2 288.3 695.4 288.9 700.0 289.5C704.6 290.1 710.5 292.2 712.6 292.7" stroke="#a8a8a8" stroke-width="2.60"/>
<path d="M664.0 296.4C665.7 295.5 670.7 292.3 674.0 291.0C677.3 289.7 679.7 289.1 684.0 288.8C688.3 288.5 695.3 288.7 700.0 289.4C704.7 290.1 710.3 292.4 712.4 293.0" stroke="#c4c4c4" stroke-width="2.12"/>
<path d="M654.0 319.0C656.3 317.4 662.8 311.8 668.0 309.5C673.2 307.2 679.3 305.7 685.0 305.4C690.7 305.1 697.1 306.2 702.0 307.5C706.9 308.8 712.5 312.3 714.6 313.3" stroke="#808080" stroke-width="2.83"/>
<path d="M660.0 314.0C662.3 313.0 669.0 309.0 674.0 308.0C679.0 307.0 684.7 307.2 690.0 308.0C695.3 308.8 703.3 312.2 706.0 313.0" stroke="#a0a0a0" stroke-width="2.36"/>
<path d="M651.0 305.2C651.6 307.3 653.3 313.8 654.6 318.0C655.9 322.2 657.9 328.3 658.6 330.4" stroke="#606060" stroke-width="3.07"/>
<path d="M658.6 330.4C658.6 328.0 658.4 320.7 658.4 316.0C658.4 311.3 658.6 304.3 658.6 302.0" stroke="#686868" stroke-width="2.83"/>
<path d="M658.6 302.0C659.4 304.2 661.9 310.6 663.5 315.0C665.1 319.4 667.7 326.0 668.5 328.2" stroke="#5c5c5c" stroke-width="3.07"/>
<path d="M668.5 328.2C669.0 326.8 670.4 322.5 671.5 320.0C672.6 317.5 673.6 315.3 675.0 313.0C676.4 310.7 679.2 307.2 680.0 306.0" stroke="#707070" stroke-width="2.83"/>
<path d="M650.6 305.6C651.3 305.2 653.1 303.9 654.6 303.4C656.1 302.9 658.7 302.6 659.5 302.4" stroke="#787878" stroke-width="2.60"/>
<path d="M703.6 310.7C704.7 309.9 707.8 307.1 710.0 305.6C712.2 304.2 715.7 300.9 716.8 302.0C717.9 303.1 717.0 308.7 716.8 312.0C716.6 315.3 715.9 320.1 715.7 321.7" stroke="#707070" stroke-width="2.95"/>
<path d="M699.2 336.0C697.9 336.6 694.0 338.3 691.5 339.6C689.0 340.9 683.9 342.6 683.9 343.6C683.9 344.6 689.0 345.1 691.5 345.6C694.0 346.2 697.9 346.7 699.2 346.9" stroke="#707070" stroke-width="3.42"/>
<path d="M686.0 343.6L698.0 338.0" stroke="#909090" stroke-width="2.36"/>
<path d="M675.0 383.0C674.4 384.3 672.6 388.2 671.5 391.0C670.4 393.8 669.0 398.5 668.5 400.0" stroke="#606060" stroke-width="3.07"/>
<path d="M680.6 384.0C680.1 385.3 678.4 389.3 677.5 392.0C676.6 394.7 675.4 398.7 675.0 400.0" stroke="#585858" stroke-width="3.07"/>
<path d="M686.0 394.0C686.8 392.9 689.2 389.3 691.0 387.5C692.8 385.7 694.8 383.1 697.0 383.0C699.2 382.9 701.8 385.5 704.0 387.0C706.2 388.5 708.2 389.8 710.0 392.0C711.8 394.2 713.8 398.7 714.6 400.0" stroke="#606060" stroke-width="3.07"/>
<path d="M716.8 383.0C717.2 384.5 718.3 389.2 719.0 392.0C719.7 394.8 720.7 398.7 721.0 400.0" stroke="#787878" stroke-width="2.83"/>
<path d="M710.7 400.0C706.9 404.7 695.5 418.9 688.0 428.0C680.5 437.1 670.9 449.1 665.7 454.8C660.5 460.5 659.6 460.1 657.0 462.0C654.4 463.9 651.2 465.8 650.0 466.5" stroke="#444444" stroke-width="3.42"/>
<path d="M720.5 400.0C721.5 404.9 725.0 419.6 726.3 429.4C727.6 439.2 728.1 450.3 728.3 458.7C728.5 467.1 728.1 472.8 727.6 480.0C727.1 487.2 725.8 498.2 725.4 501.8" stroke="#747474" stroke-width="2.95"/>
<path d="M706.8 407.8C708.4 411.4 714.6 420.9 716.6 429.4C718.6 437.9 718.2 453.8 718.5 458.7" stroke="#545454" stroke-width="3.07"/>
<path d="M712.0 403.0C713.5 406.7 719.2 418.0 721.0 425.0C722.8 432.0 722.2 441.7 722.5 445.0" stroke="#989898" stroke-width="2.36"/>
<path d="M726.3 449.0C725.8 451.5 724.6 459.4 723.0 464.0C721.4 468.6 719.1 473.1 716.6 476.3C714.1 479.6 711.3 481.7 708.0 483.5C704.7 485.3 700.5 486.4 697.0 487.0C693.5 487.6 690.3 487.3 687.0 486.8C683.7 486.3 680.4 485.3 677.4 484.0C674.4 482.7 671.3 480.9 669.0 479.0C666.7 477.1 664.6 473.5 663.7 472.4" stroke="#848484" stroke-width="2.95"/>
<path d="M673.5 400.0C672.2 404.9 667.7 419.6 665.7 429.4C663.8 439.2 662.5 450.3 661.8 458.7C661.1 467.1 661.5 472.5 661.6 480.0C661.8 487.5 662.5 499.8 662.7 503.7" stroke="#848484" stroke-width="2.95"/>
<path d="M668.0 400.0C666.7 402.5 662.2 411.0 660.0 415.0C657.8 419.0 655.8 422.5 655.0 424.0" stroke="#c4c4c4" stroke-width="2.60"/>
<path d="M678.0 396.0L670.0 412.0" stroke="#989898" stroke-width="2.60"/>
<path d="M690.0 385.0C687.7 386.8 680.0 391.5 676.0 396.0C672.0 400.5 667.7 409.3 666.0 412.0" stroke="#c8c8c8" stroke-width="2.36"/>
<path d="M716.0 408.0L711.0 413.0" stroke="#707070" stroke-width="3.07"/>
<path d="M227.0 417.0C227.7 414.8 229.0 408.5 231.0 404.0C233.0 399.5 236.1 394.0 239.0 390.0C241.9 386.0 245.5 382.5 248.7 380.0C251.9 377.5 255.2 376.3 258.0 375.2C260.8 374.1 262.2 373.5 265.4 373.6C268.6 373.7 273.1 374.5 277.0 376.0C280.9 377.5 285.7 380.6 289.0 382.4C292.3 384.2 294.4 385.4 297.0 387.0C299.6 388.6 303.3 391.2 304.6 392.0" stroke="#989898" stroke-width="2.83"/>
<path d="M224.0 423.0C224.8 420.7 226.8 413.7 229.0 409.0C231.2 404.3 235.7 397.3 237.0 395.0" stroke="#b8b8b8" stroke-width="2.36"/>
<path d="M229.0 414.0C230.2 411.3 233.2 402.7 236.0 398.0C238.8 393.3 242.3 389.0 246.0 386.0C249.7 383.0 256.0 381.0 258.0 380.0" stroke="#c0c0c0" stroke-width="2.36"/>
<path d="M198.8 428.0C199.5 427.4 201.2 425.4 203.0 424.6C204.8 423.8 206.9 423.5 209.6 423.0C212.3 422.5 215.8 422.3 219.0 421.6C222.2 420.9 226.2 420.0 229.0 419.0C231.8 418.0 233.5 416.9 235.5 415.6C237.5 414.3 238.9 413.2 240.9 411.3C242.9 409.4 245.2 406.3 247.5 404.0C249.8 401.7 252.3 399.5 254.6 397.6C256.9 395.7 258.7 393.9 261.0 392.6C263.3 391.3 265.5 390.3 268.3 389.8C271.1 389.3 274.8 389.2 278.0 389.4C281.2 389.6 284.5 390.1 287.8 390.8C291.1 391.5 294.7 392.3 298.0 393.4C301.3 394.5 304.5 396.0 307.4 397.6C310.3 399.2 312.9 401.0 315.5 403.0C318.1 405.0 320.5 407.7 323.0 409.4C325.5 411.1 328.2 412.1 330.5 413.4C332.8 414.7 335.8 416.1 336.8 417.2C337.8 418.3 336.9 419.2 336.6 420.0C336.3 420.8 335.1 421.7 334.8 422.0" stroke="#101010" stroke-width="4.25"/>
<path d="M210.4 424.6C212.0 424.4 216.6 423.9 219.8 423.2C223.0 422.5 227.1 421.6 229.8 420.6C232.6 419.6 234.3 418.5 236.3 417.2C238.3 415.9 239.7 414.8 241.7 412.9C243.7 411.0 246.0 407.9 248.3 405.6C250.6 403.3 253.2 401.1 255.4 399.2C257.6 397.3 259.5 395.5 261.8 394.2C264.1 392.9 266.3 391.9 269.1 391.4C271.9 390.9 275.6 390.8 278.8 391.0C282.1 391.2 285.3 391.7 288.6 392.4C291.9 393.1 295.5 393.9 298.8 395.0C302.1 396.1 305.3 397.6 308.2 399.2C311.1 400.8 313.7 402.6 316.3 404.6C318.9 406.6 321.3 409.3 323.8 411.0C326.3 412.7 330.1 414.3 331.3 415.0" stroke="#383838" stroke-width="2.83"/>
<path d="M237.0 409.4C238.3 407.8 242.1 402.9 245.0 400.0C247.9 397.1 251.6 393.6 254.6 391.7C257.6 389.8 260.1 389.0 263.0 388.4C265.9 387.8 268.4 387.6 272.2 387.8C276.0 388.0 281.4 388.6 286.0 389.6C290.6 390.6 295.9 392.0 299.6 393.7C303.3 395.4 305.4 397.7 308.0 400.0C310.6 402.3 314.0 406.2 315.2 407.4" stroke="#383838" stroke-width="3.07"/>
<path d="M240.0 413.0C241.7 411.2 246.3 405.4 250.0 402.5C253.7 399.6 257.7 397.1 262.0 395.5C266.3 393.9 271.0 393.1 276.0 393.0C281.0 392.9 287.0 393.5 292.0 395.0C297.0 396.5 301.7 399.2 306.0 402.0C310.3 404.8 316.0 410.3 318.0 412.0" stroke="#585858" stroke-width="2.83"/>
<path d="M262.0 389.0C263.3 388.5 267.2 386.4 270.0 386.2C272.8 385.9 277.5 387.3 279.0 387.5" stroke="#404040" stroke-width="2.83"/>
<path d="M264.0 392.0C266.8 392.1 275.0 391.6 281.0 392.6C287.0 393.6 294.5 395.4 300.0 398.0C305.5 400.6 311.7 406.3 314.0 408.0" stroke="#888888" stroke-width="2.60"/>
<path d="M200.0 430.0C202.0 429.4 207.3 427.6 212.0 426.4C216.7 425.2 223.7 424.6 228.0 423.0C232.3 421.4 236.3 418.0 238.0 417.0" stroke="#303030" stroke-width="3.07"/>
<path d="M231.0 418.2C233.2 417.8 239.4 416.5 244.0 416.0C248.6 415.5 253.3 415.4 258.5 415.2C263.7 415.0 269.4 414.8 275.0 415.0C280.6 415.2 287.1 415.5 291.8 416.2C296.6 416.9 301.6 418.5 303.5 419.0" stroke="#484848" stroke-width="3.54"/>
<path d="M236.0 423.0C238.3 422.9 246.0 422.4 250.0 422.4C254.0 422.4 258.3 422.9 260.0 423.0" stroke="#707070" stroke-width="2.83"/>
<path d="M299.6 399.6C300.7 401.3 304.1 406.4 306.0 410.0C307.9 413.6 310.4 419.2 311.3 421.0" stroke="#585858" stroke-width="3.07"/>
<path d="M304.0 398.5C305.2 400.1 308.8 404.8 311.0 408.0C313.2 411.2 316.0 416.3 317.0 418.0" stroke="#787878" stroke-width="2.83"/>
<path d="M309.0 400.0L314.0 406.0" stroke="#606060" stroke-width="2.83"/>
<path d="M295.0 398.0C295.8 399.7 298.7 404.7 300.0 408.0C301.3 411.3 302.5 416.3 303.0 418.0" stroke="#808080" stroke-width="2.60"/>
<path d="M198.8 427.0C198.6 428.5 197.8 433.1 197.6 436.0C197.4 438.9 197.5 441.3 197.8 444.6C198.1 447.9 198.6 452.4 199.6 456.0C200.6 459.6 203.0 464.3 203.7 466.0" stroke="#282828" stroke-width="4.01"/>
<path d="M205.6 427.4C205.5 430.3 204.7 439.9 204.8 445.0C204.9 450.1 205.4 454.4 206.0 458.0C206.6 461.6 208.1 465.1 208.5 466.5" stroke="#343434" stroke-width="3.54"/>
<path d="M201.5 425.0C201.3 427.5 200.5 435.0 200.6 440.0C200.7 445.0 201.1 450.3 202.0 455.0C202.9 459.7 205.3 465.8 206.0 468.0" stroke="#585858" stroke-width="3.07"/>
<path d="M196.4 432.0C196.3 434.3 195.7 441.7 196.0 446.0C196.3 450.3 197.7 456.0 198.0 458.0" stroke="#707070" stroke-width="2.60"/>
<circle cx="208.6" cy="433.9" r="3.3" fill="#101010" stroke="none"/>
<ellipse cx="209" cy="433.6" rx="5.8" ry="6.2" stroke="#989898" stroke-width="2.12"/>
<ellipse cx="207" cy="432" rx="8" ry="8.4" stroke="#c4c4c4" stroke-width="1.89"/>
<path d="M209.6 438.7C218.3 438.4 244.6 437.3 262.0 436.8C279.4 436.3 305.6 436.0 314.3 435.8" stroke="#101010" stroke-width="3.78"/>
<path d="M212.4 441.4L250.0 439.4" stroke="#505050" stroke-width="2.83"/>
<path d="M190.0 441.6L200.0 441.2" stroke="#707070" stroke-width="2.83"/>
<ellipse cx="281" cy="431.9" rx="9" ry="9" stroke="#a8a8a8" stroke-width="2.60"/>
<ellipse cx="281" cy="431.9" rx="6" ry="6" stroke="#808080" stroke-width="3.07"/>
<circle cx="281" cy="431.9" r="2.8" fill="#303030" stroke="none"/>
<path d="M230.0 440.7C230.3 441.6 231.0 444.4 232.0 446.0C233.0 447.6 234.4 449.3 236.0 450.5C237.6 451.7 239.7 452.9 241.5 453.4C243.3 453.9 245.2 454.0 246.8 453.4C248.5 452.8 250.1 451.5 251.4 450.0C252.7 448.5 254.1 446.1 254.6 444.6C255.1 443.1 254.8 442.0 254.6 441.0C254.4 440.0 253.8 439.1 253.6 438.7" stroke="#141414" stroke-width="3.78"/>
<ellipse cx="243" cy="441" rx="13" ry="11" stroke="#c8c8c8" stroke-width="1.89"/>
<path d="M226.0 428.0C225.3 429.3 222.3 433.0 222.0 436.0C221.7 439.0 222.7 443.3 224.0 446.0C225.3 448.7 229.0 451.0 230.0 452.0" stroke="#a8a8a8" stroke-width="2.36"/>
<path d="M204.6 451.9L217.3 451.9" stroke="#343434" stroke-width="3.54"/>
<path d="M205.7 455.6L216.4 455.4" stroke="#282828" stroke-width="3.30"/>
<path d="M270.0 451.4L284.0 451.4" stroke="#484848" stroke-width="3.30"/>
<path d="M203.7 466.0C205.6 466.6 210.8 468.6 215.0 469.4C219.2 470.2 223.5 470.8 229.0 471.0C234.5 471.2 241.4 470.9 248.0 470.6C254.6 470.3 261.7 469.8 268.3 469.0C274.9 468.2 284.6 466.5 287.8 466.0" stroke="#2c2c2c" stroke-width="3.78"/>
<path d="M206.0 462.0C209.7 462.9 218.7 466.7 228.0 467.4C237.3 468.1 251.7 466.9 262.0 466.0C272.3 465.1 285.3 462.7 290.0 462.0" stroke="#484848" stroke-width="3.30"/>
<path d="M204.0 469.5C207.7 470.2 217.5 473.4 226.0 474.0C234.5 474.6 244.7 474.2 255.0 473.4C265.3 472.6 282.5 470.1 288.0 469.4" stroke="#747474" stroke-width="2.83"/>
<path d="M210.0 458.0C215.0 458.4 228.3 460.7 240.0 460.6C251.7 460.5 273.3 457.9 280.0 457.4" stroke="#606060" stroke-width="2.83"/>
<path d="M208.0 464.5C213.3 464.4 227.0 465.0 240.0 464.0C253.0 463.0 278.3 459.5 286.0 458.6" stroke="#686868" stroke-width="2.60"/>
<path d="M296.0 431.0C294.7 432.7 292.8 436.5 292.0 440.0C291.2 443.5 290.8 448.3 291.0 452.0C291.2 455.7 291.7 459.5 293.0 462.0C294.3 464.5 296.7 466.5 299.0 467.0C301.3 467.5 304.7 466.7 307.0 465.0C309.3 463.3 311.5 460.2 313.0 457.0C314.5 453.8 315.8 449.5 316.0 446.0C316.2 442.5 315.3 438.5 314.0 436.0C312.7 433.5 310.3 432.0 308.0 431.0C305.7 430.0 302.0 430.0 300.0 430.0C298.0 430.0 297.3 429.3 296.0 431.0Z" stroke="#1c1c1c" stroke-width="4.13"/>
<path d="M297.5 430.0L297.0 462.0" stroke="#141414" stroke-width="4.01"/>
<ellipse cx="303" cy="448.5" rx="13.4" ry="18.6" stroke="#686868" stroke-width="2.60" transform="rotate(6 303 448.5)"/>
<ellipse cx="304" cy="444" rx="8.6" ry="12.4" stroke="#505050" stroke-width="2.60" transform="rotate(4 304 444)"/>
<path d="M293.0 466.0C294.2 466.8 297.3 470.4 300.0 471.0C302.7 471.6 306.3 471.2 309.0 469.5C311.7 467.8 314.8 462.4 316.0 461.0" stroke="#787878" stroke-width="2.60"/>
<ellipse cx="334.8" cy="438.7" rx="8.6" ry="15" stroke="#383838" stroke-width="3.78" transform="rotate(4 334.8 438.7)"/>
<ellipse cx="335" cy="438.7" rx="12" ry="17.4" stroke="#989898" stroke-width="2.36" transform="rotate(4 335 438.7)"/>
<ellipse cx="335.5" cy="439" rx="5.4" ry="11" stroke="#787878" stroke-width="2.60" transform="rotate(4 335.5 439)"/>
<path d="M312.0 455.0C313.7 454.0 318.3 450.5 322.0 449.0C325.7 447.5 332.0 446.5 334.0 446.0" stroke="#505050" stroke-width="2.83"/>
<path d="M316.0 462.0C317.7 460.8 322.5 456.7 326.0 455.0C329.5 453.3 335.2 452.5 337.0 452.0" stroke="#808080" stroke-width="2.60"/>
<path d="M331.0 380.0C330.0 382.2 326.7 388.8 325.0 393.0C323.3 397.2 322.0 402.1 321.0 405.4C320.0 408.7 319.3 411.7 319.0 413.0" stroke="#606060" stroke-width="2.83"/>
<path d="M51.0 446.0L198.0 440.0" stroke="url(#sg23)" stroke-width="2.95"/>
<path d="M53.0 474.4L361.2 437.7" stroke="url(#sg24)" stroke-width="3.30"/>
<path d="M53.0 490.4L366.0 443.0" stroke="url(#sg25)" stroke-width="3.30"/>
<path d="M338.7 433.8C343.1 432.7 356.4 429.4 365.0 427.4C373.6 425.4 385.8 422.9 390.0 422.0" stroke="#747474" stroke-width="3.30"/>
<path d="M346.5 432.8L390.0 427.0" stroke="#888888" stroke-width="2.83"/>
<path d="M380.0 425.4C385.0 425.6 400.9 426.3 410.0 426.6C419.1 426.9 430.7 427.3 434.8 427.4" stroke="#888888" stroke-width="3.07"/>
<path d="M380.0 428.5C384.2 428.7 396.3 429.2 405.0 429.5C413.7 429.8 427.5 429.9 432.0 430.0" stroke="#989898" stroke-width="2.60"/>
<path d="M380.0 434.0C384.7 433.9 399.2 433.7 408.0 433.4C416.8 433.1 428.7 432.5 432.8 432.3" stroke="#b8b8b8" stroke-width="2.60"/>
<path d="M388.0 421.0C390.0 421.3 394.7 422.4 400.0 423.0C405.3 423.6 416.7 424.2 420.0 424.5" stroke="#b0b0b0" stroke-width="2.36"/>
<path d="M350.0 412.3L350.0 421.0" stroke="#080808" stroke-width="3.54"/>
<path d="M356.3 416.2L356.3 427.0" stroke="#989898" stroke-width="2.60"/>
<path d="M366.0 420.0L366.0 429.0" stroke="#505050" stroke-width="2.83"/>
<path d="M346.5 380.0C346.8 382.8 347.5 391.5 348.0 397.0C348.5 402.5 349.2 410.3 349.5 413.0" stroke="#909090" stroke-width="2.83"/>
<path d="M372.0 380.0C370.3 382.5 365.3 390.1 362.0 395.0C358.7 399.9 354.0 407.0 352.4 409.4" stroke="#b0b0b0" stroke-width="2.60"/>
<path d="M376.0 380.0C374.0 383.3 367.3 394.3 364.0 400.0C360.7 405.7 357.3 411.7 356.0 414.0" stroke="#c4c4c4" stroke-width="2.36"/>
<path d="M444.6 421.5C455.5 422.4 488.1 425.0 510.0 427.0C531.9 429.0 564.8 432.2 575.7 433.3" stroke="#989898" stroke-width="2.95"/>
<path d="M454.4 429.4C465.3 430.0 499.1 431.7 520.0 433.0C540.9 434.3 570.0 436.3 580.0 437.0" stroke="#989898" stroke-width="2.60"/>
<path d="M444.6 435.2C449.7 434.9 464.9 434.0 475.0 433.6C485.1 433.2 500.0 433.1 505.0 433.0" stroke="#b8b8b8" stroke-width="2.36"/>
<path d="M433.0 438.0L747.9 452.8" stroke="url(#sg26)" stroke-width="3.42"/>
<path d="M432.4 436.2L747.5 481.2" stroke="url(#sg27)" stroke-width="3.66"/>
<path d="M433.0 437.6L747.5 492.0" stroke="url(#sg28)" stroke-width="3.19"/>
<path d="M435.0 437.7L684.0 507.0" stroke="#484848" stroke-width="3.07"/>
<path d="M445.0 439.0L651.0 507.0" stroke="#686868" stroke-width="2.83"/>
<path d="M468.0 450.4L557.0 482.0" stroke="#b0b0b0" stroke-width="2.60"/>
<path d="M452.0 440.0C483.3 447.7 598.7 475.0 640.0 486.0C681.3 497.0 690.0 502.7 700.0 506.0" stroke="#646464" stroke-width="2.60"/>
<path d="M470.0 444.0C485.0 449.0 535.0 465.0 560.0 474.0C585.0 483.0 610.0 494.0 620.0 498.0" stroke="#b0b0b0" stroke-width="2.12"/>
<path d="M559.0 400.0L561.0 447.0" stroke="#080808" stroke-width="3.54"/></svg>
</div>
<svg id="chrome" width="1024" height="547" viewBox="0 0 1024 547">
<rect x="4" y="3" width="8.5" height="8.5" rx="1.5" fill="#0f2a4e"/>
<g transform="translate(5.40 9.60) scale(1.0000 1)" fill="#6fb6ff"><text x="0.00" y="0" font-family="Liberation Sans, sans-serif" font-size="4.84" font-weight="bold" xml:space="preserve">Ps</text></g>
<g transform="translate(21.00 10.60) scale(0.8628 1)" fill="#e4e4e4"><text x="0.00" y="0" font-family="'Liberation Sans', 'Noto Sans CJK SC', sans-serif" font-size="8">文件</text><text x="16.00" y="0" font-family="Liberation Sans, sans-serif" font-size="7.44" xml:space="preserve">(F)</text></g>
<g transform="translate(50.00 10.60) scale(0.8874 1)" fill="#e4e4e4"><text x="0.00" y="0" font-family="'Liberation Sans', 'Noto Sans CJK SC', sans-serif" font-size="8">编辑</text><text x="16.00" y="0" font-family="Liberation Sans, sans-serif" font-size="7.44" xml:space="preserve">(E)</text></g>
<g transform="translate(79.00 10.60) scale(0.9122 1)" fill="#e4e4e4"><text x="0.00" y="0" font-family="'Liberation Sans', 'Noto Sans CJK SC', sans-serif" font-size="8">图像</text><text x="16.00" y="0" font-family="Liberation Sans, sans-serif" font-size="7.44" xml:space="preserve">(I)</text></g>
<g transform="translate(107.00 10.60) scale(0.8767 1)" fill="#e4e4e4"><text x="0.00" y="0" font-family="'Liberation Sans', 'Noto Sans CJK SC', sans-serif" font-size="8">图层</text><text x="16.00" y="0" font-family="Liberation Sans, sans-serif" font-size="7.44" xml:space="preserve">(L)</text></g>
<g transform="translate(137.00 10.60) scale(0.8488 1)" fill="#e4e4e4"><text x="0.00" y="0" font-family="'Liberation Sans', 'Noto Sans CJK SC', sans-serif" font-size="8">文字</text><text x="16.00" y="0" font-family="Liberation Sans, sans-serif" font-size="7.44" xml:space="preserve">(Y)</text></g>
<g transform="translate(166.00 10.60) scale(0.8874 1)" fill="#e4e4e4"><text x="0.00" y="0" font-family="'Liberation Sans', 'Noto Sans CJK SC', sans-serif" font-size="8">选择</text><text x="16.00" y="0" font-family="Liberation Sans, sans-serif" font-size="7.44" xml:space="preserve">(S)</text></g>
<g transform="translate(196.00 10.60) scale(0.9020 1)" fill="#e4e4e4"><text x="0.00" y="0" font-family="'Liberation Sans', 'Noto Sans CJK SC', sans-serif" font-size="8">滤镜</text><text x="16.00" y="0" font-family="Liberation Sans, sans-serif" font-size="7.44" xml:space="preserve">(T)</text></g>
<g transform="translate(226.00 10.60) scale(0.9260 1)" fill="#e4e4e4"><text x="0.00" y="0" font-family="'Liberation Sans', 'Noto Sans CJK SC', sans-serif" font-size="8">视图</text><text x="16.00" y="0" font-family="Liberation Sans, sans-serif" font-size="7.44" xml:space="preserve">(V)</text></g>
<g transform="translate(257.00 10.60) scale(0.9375 1)" fill="#e4e4e4"><text x="0.00" y="0" font-family="'Liberation Sans', 'Noto Sans CJK SC', sans-serif" font-size="8">增效工具</text></g>
<g transform="translate(293.00 10.60) scale(0.8936 1)" fill="#e4e4e4"><text x="0.00" y="0" font-family="'Liberation Sans', 'Noto Sans CJK SC', sans-serif" font-size="8">窗口</text><text x="16.00" y="0" font-family="Liberation Sans, sans-serif" font-size="7.44" xml:space="preserve">(W)</text></g>
<g transform="translate(325.00 10.60) scale(0.9496 1)" fill="#e4e4e4"><text x="0.00" y="0" font-family="'Liberation Sans', 'Noto Sans CJK SC', sans-serif" font-size="8">帮助</text><text x="16.00" y="0" font-family="Liberation Sans, sans-serif" font-size="7.44" xml:space="preserve">(H)</text></g>
<path d="M950.5 6.5H957" stroke="#e0e0e0" stroke-width="0.8"/>
<rect x="977.5" y="4.8" width="4.6" height="4.6" rx="1" fill="none" stroke="#e0e0e0" stroke-width="0.8"/>
<path d="M979 4.8V3.6H983.4V8H982.2" fill="none" stroke="#e0e0e0" stroke-width="0.8"/>
<path d="M1006 3.8L1012 9.8M1012 3.8L1006 9.8" stroke="#e8e8e8" stroke-width="0.9"/>
<path d="M4.5 20V34" stroke="#474747" stroke-width="1"/>
<path d="M12 27.6L17.2 22.8L22.4 27.6H20.9V31.6H18.4V28.6H16V31.6H13.5V27.6Z" fill="#e6e6e6"/>
<path d="M32.5 19V35" stroke="#3e3e3e" stroke-width="1"/>
<path d="M47.6 21.6L48.8 22.6L43.4 29L42 28Z" fill="#e6e6e6"/><path d="M41.6 28.6L42.9 29.7C42.6 31.3 40.7 32.3 38.8 31.6C40 31 40.2 29.4 41.6 28.6Z" fill="#e6e6e6"/>
<path d="M52.099999999999994 26.2L54.3 28.400000000000002L56.5 26.2" fill="none" stroke="#bdbdbd" stroke-width="0.9"/>
<path d="M62 19V35" stroke="#3e3e3e" stroke-width="1"/>
<circle cx="74.6" cy="22.8" r="1.9" fill="#f0f0f0"/>
<g transform="translate(71.29 34.40) scale(1.0000 1)" fill="#e0e0e0"><text x="0.00" y="0" font-family="Liberation Sans, sans-serif" font-size="5.95" xml:space="preserve">12</text></g>
<path d="M84.8 26.2L87 28.400000000000002L89.2 26.2" fill="none" stroke="#bdbdbd" stroke-width="0.9"/>
<path d="M97.5 22H102L103 23H107.5V32.4H97.5Z" fill="#e8e8e8"/><path d="M105.8 24.3L106.5 24.9L102.6 29.3L101.7 28.5ZM101.3 28.9L102.2 29.7C102 30.8 100.6 31.4 99.4 31C100.2 30.5 100.3 29.5 101.3 28.9Z" fill="#3c3c3c"/>
<path d="M113.5 19V35" stroke="#3e3e3e" stroke-width="1"/>
<g transform="translate(119.50 29.80) scale(0.9409 1)" fill="#c8c8c8"><text x="0.00" y="0" font-family="'Liberation Sans', 'Noto Sans CJK SC', sans-serif" font-size="8">模式</text><text x="16.00" y="0" font-family="Liberation Sans, sans-serif" font-size="7.44" xml:space="preserve">:</text></g>
<rect x="140" y="21" width="81" height="12.5" rx="1" fill="#454545"/>
<g transform="translate(145.00 30.00) scale(0.9688 1)" fill="#e6e6e6"><text x="0.00" y="0" font-family="'Liberation Sans', 'Noto Sans CJK SC', sans-serif" font-size="8">正常</text></g>
<path d="M213.8 26.5L216 28.700000000000003L218.2 26.5" fill="none" stroke="#bdbdbd" stroke-width="0.9"/>
<path d="M227 19V35" stroke="#3e3e3e" stroke-width="1"/>
<g transform="translate(234.50 29.80) scale(0.9100 1)" fill="#c8c8c8"><text x="0.00" y="0" font-family="'Liberation Sans', 'Noto Sans CJK SC', sans-serif" font-size="8">不透明度</text><text x="32.00" y="0" font-family="Liberation Sans, sans-serif" font-size="7.44" xml:space="preserve">:</text></g>
<rect x="270" y="21.3" width="22.6" height="11.6" fill="#3f3f3f" stroke="#616161" stroke-width="0.6"/>
<g transform="translate(271.60 29.70) scale(0.9404 1)" fill="#e8e8e8"><text x="0.00" y="0" font-family="Liberation Sans, sans-serif" font-size="7.07" xml:space="preserve">100%</text></g>
<rect x="293.40000000000003" y="21.3" width="8.5" height="11.6" fill="#3f3f3f" stroke="#616161" stroke-width="0.6"/>
<path d="M295.85 26.6L297.65000000000003 28.4L299.45000000000005 26.6" fill="none" stroke="#bdbdbd" stroke-width="0.8"/>
<circle cx="313.4" cy="27.8" r="4" fill="none" stroke="#dadada" stroke-width="0.9"/><path d="M317.6 22.2L318.6 23L314.4 28L313.2 27.2Z" fill="#e6e6e6" stroke="#535353" stroke-width="0.5"/>
<path d="M324.5 19V35" stroke="#3e3e3e" stroke-width="1"/>
<g transform="translate(331.00 29.80) scale(0.8856 1)" fill="#c8c8c8"><text x="0.00" y="0" font-family="'Liberation Sans', 'Noto Sans CJK SC', sans-serif" font-size="8">流量</text><text x="16.00" y="0" font-family="Liberation Sans, sans-serif" font-size="7.44" xml:space="preserve">:</text></g>
<rect x="351.3" y="21.3" width="22.6" height="11.6" fill="#3f3f3f" stroke="#616161" stroke-width="0.6"/>
<g transform="translate(352.90 29.70) scale(0.9404 1)" fill="#e8e8e8"><text x="0.00" y="0" font-family="Liberation Sans, sans-serif" font-size="7.07" xml:space="preserve">100%</text></g>
<rect x="374.70000000000005" y="21.3" width="8.5" height="11.6" fill="#3f3f3f" stroke="#616161" stroke-width="0.6"/>
<path d="M377.15000000000003 26.6L378.95000000000005 28.4L380.75000000000006 26.6" fill="none" stroke="#bdbdbd" stroke-width="0.8"/>
<path d="M391 26.2C392.5 24.2 395.5 24.4 396.6 26.6C397.2 28.4 396 30.4 394 30.6H390.6" fill="none" stroke="#dadada" stroke-width="0.9"/><path d="M399.8 22.4L400.8 23.2L396.4 28.6L395.4 27.8Z" fill="#e6e6e6"/><path d="M390 28L392 30.4" stroke="#dadada" stroke-width="0.8"/>
<path d="M407.5 19V35" stroke="#3e3e3e" stroke-width="1"/>
<g transform="translate(413.00 29.80) scale(0.9133 1)" fill="#c8c8c8"><text x="0.00" y="0" font-family="'Liberation Sans', 'Noto Sans CJK SC', sans-serif" font-size="8">平滑</text><text x="16.00" y="0" font-family="Liberation Sans, sans-serif" font-size="7.44" xml:space="preserve">:</text></g>
<rect x="433.3" y="21.3" width="22.2" height="11.6" fill="#3f3f3f" stroke="#616161" stroke-width="0.6"/>
<g transform="translate(434.90 29.70) scale(0.9543 1)" fill="#e8e8e8"><text x="0.00" y="0" font-family="Liberation Sans, sans-serif" font-size="7.07" xml:space="preserve">10%</text></g>
<rect x="456.3" y="21.3" width="8.5" height="11.6" fill="#3f3f3f" stroke="#616161" stroke-width="0.6"/>
<path d="M458.75 26.6L460.55 28.4L462.35 26.6" fill="none" stroke="#bdbdbd" stroke-width="0.8"/>
<circle cx="475.8" cy="26.8" r="2.6" fill="none" stroke="#e6e6e6" stroke-width="2"/><circle cx="475.8" cy="26.8" r="3.9" fill="none" stroke="#e6e6e6" stroke-width="1.3" stroke-dasharray="1.5 1.56"/><path d="M479 31.5H481L480 32.6Z" fill="#e0e0e0"/>
<path d="M487 19V35" stroke="#3e3e3e" stroke-width="1"/>
<path d="M497.6 23.6L490.8 30.2H498" fill="none" stroke="#dcdcdc" stroke-width="0.9"/><path d="M494.4 30.2C494.4 28.8 494 27.8 493.2 27.2" fill="none" stroke="#dcdcdc" stroke-width="0.8"/>
<rect x="501.3" y="21.3" width="23.4" height="11.6" fill="#3f3f3f" stroke="#616161" stroke-width="0.6"/>
<g transform="translate(503.00 29.80) scale(1.0000 1)" fill="#e8e8e8"><text x="0.00" y="0" font-family="Liberation Sans, sans-serif" font-size="7.07" xml:space="preserve">0°</text></g>
<path d="M529 19V35" stroke="#3e3e3e" stroke-width="1"/>
<circle cx="539.6" cy="27.6" r="4" fill="none" stroke="#dadada" stroke-width="0.9"/><circle cx="539.6" cy="27.6" r="1.8" fill="none" stroke="#dadada" stroke-width="0.8"/><path d="M544.4 22L539.8 27.4" stroke="#e6e6e6" stroke-width="1.1"/>
<path d="M560 23.4C557.5 21.4 555 22 555.6 24.6C556 26.4 557.4 27 559 27.2C557 27.6 556 29.4 556.8 31C557.8 32.6 559.6 31.6 560 29.6M561.6 23.4C564 21.4 566.4 22 565.8 24.6C565.4 26.4 564.2 27 562.6 27.2C564.6 27.6 565.4 29.4 564.6 31C563.8 32.4 562.2 31.6 561.6 29.6" fill="none" stroke="#dadada" stroke-width="0.85"/><path d="M560.8 23V32" stroke="#dadada" stroke-width="0.7" stroke-dasharray="1 1"/>
<rect x="904" y="20.3" width="31.4" height="13.6" rx="6.8" fill="#1473e6"/>
<g transform="translate(911.90 30.00) scale(1.0000 1)" fill="#ffffff"><text x="0.00" y="0" font-family="'Liberation Sans', 'Noto Sans CJK SC', sans-serif" font-size="7.8">共享</text></g>
<path d="M949.3 22.2C951.6 22.2 952.6 24 952.6 26C952.6 28 953.2 28.8 954 29.6H944.6C945.4 28.8 946 28 946 26C946 24 947 22.2 949.3 22.2Z" fill="#dcdcdc"/><circle cx="949.3" cy="30.8" r="1" fill="#dcdcdc"/><circle cx="949.3" cy="21.8" r="0.8" fill="#dcdcdc"/>
<circle cx="967.6" cy="26.2" r="3.3" fill="none" stroke="#e0e0e0" stroke-width="1"/><path d="M970 28.8L972.8 31.6" stroke="#e0e0e0" stroke-width="1.2"/>
<path d="M987.4 23.2C989.4 23.2 990.4 24.6 990.4 26C990.4 27.4 989.4 28 989 29.4H985.8C985.4 28 984.4 27.4 984.4 26C984.4 24.6 985.4 23.2 987.4 23.2Z" fill="none" stroke="#e0e0e0" stroke-width="0.9"/><path d="M986 30.6H988.8M986.4 31.8H988.4" stroke="#e0e0e0" stroke-width="0.8"/><path d="M987.4 20.6V21.8M983 22.4L983.8 23.2M991.8 22.4L991 23.2M981.8 26H983M991.8 26H993" stroke="#e0e0e0" stroke-width="0.7"/>
<rect x="1000.6" y="23" width="9.6" height="7.8" fill="none" stroke="#e0e0e0" stroke-width="1"/><path d="M1000.6 24H1010.2" stroke="#e0e0e0" stroke-width="1.6"/><path d="M1002.6 24V30.8" stroke="#e0e0e0" stroke-width="1"/>
<path d="M1017.2 26.3L1019 28.099999999999998L1020.8 26.3" fill="none" stroke="#bdbdbd" stroke-width="0.8"/>
<path d="M222 39V54" stroke="#383838" stroke-width="1"/>
<g transform="translate(32.50 49.40) scale(0.9556 1)" fill="#b0b0b0"><text x="0.00" y="0" font-family="Liberation Sans, sans-serif" font-size="7.07" xml:space="preserve">kling_20251224_</text><text x="53.85" y="0" font-family="'Liberation Sans', 'Noto Sans CJK SC', sans-serif" font-size="7.6">作品</text><text x="69.05" y="0" font-family="Liberation Sans, sans-serif" font-size="7.07" xml:space="preserve">__6071_0 (1)-</text><text x="113.45" y="0" font-family="'Liberation Sans', 'Noto Sans CJK SC', sans-serif" font-size="7.6">恢复的</text><text x="136.25" y="0" font-family="Liberation Sans, sans-serif" font-size="7.07" xml:space="preserve">-</text><text x="138.60" y="0" font-family="'Liberation Sans', 'Noto Sans CJK SC', sans-serif" font-size="7.6">恢复的</text><text x="161.40" y="0" font-family="Liberation Sans, sans-serif" font-size="7.07" xml:space="preserve">.psd</text></g>
<path d="M212.5 44.7l3 3m0 -3l-3 3" stroke="#cfcfcf" stroke-width="0.8"/>
<path d="M408 39V54" stroke="#383838" stroke-width="1"/>
<g transform="translate(229.50 49.40) scale(0.9861 1)" fill="#b0b0b0"><text x="0.00" y="0" font-family="Liberation Sans, sans-serif" font-size="7.07" xml:space="preserve">unity_logo_before_after-</text><text x="76.62" y="0" font-family="'Liberation Sans', 'Noto Sans CJK SC', sans-serif" font-size="7.6">恢复的</text><text x="99.42" y="0" font-family="Liberation Sans, sans-serif" font-size="7.07" xml:space="preserve">.png @ 100%(</text><text x="144.71" y="0" font-family="'Liberation Sans', 'Noto Sans CJK SC', sans-serif" font-size="7.6">索引</text><text x="159.91" y="0" font-family="Liberation Sans, sans-serif" font-size="7.07" xml:space="preserve">...</text></g>
<path d="M398.5 44.7l3 3m0 -3l-3 3" stroke="#cfcfcf" stroke-width="0.8"/>
<path d="M606 39V54" stroke="#383838" stroke-width="1"/>
<g transform="translate(416.00 49.40) scale(0.9778 1)" fill="#b0b0b0"><text x="0.00" y="0" font-family="'Liberation Sans', 'Noto Sans CJK SC', sans-serif" font-size="7.6">未标题</text><text x="22.80" y="0" font-family="Liberation Sans, sans-serif" font-size="7.07" xml:space="preserve">-1-</text><text x="31.44" y="0" font-family="'Liberation Sans', 'Noto Sans CJK SC', sans-serif" font-size="7.6">恢复的</text><text x="54.24" y="0" font-family="Liberation Sans, sans-serif" font-size="7.07" xml:space="preserve"> @ 100% (unity_logo_before_after, R...</text></g>
<path d="M596.5 44.7l3 3m0 -3l-3 3" stroke="#cfcfcf" stroke-width="0.8"/>
<rect x="606.5" y="38" width="139.5" height="17" fill="#535353"/>
<g transform="translate(613.00 49.40) scale(0.9608 1)" fill="#e6e6e6"><text x="0.00" y="0" font-family="'Liberation Sans', 'Noto Sans CJK SC', sans-serif" font-size="7.6">未标题</text><text x="22.80" y="0" font-family="Liberation Sans, sans-serif" font-size="7.07" xml:space="preserve">-1 @ 68.2% (</text><text x="64.55" y="0" font-family="'Liberation Sans', 'Noto Sans CJK SC', sans-serif" font-size="7.6">图层</text><text x="79.75" y="0" font-family="Liberation Sans, sans-serif" font-size="7.07" xml:space="preserve"> 2, RGB/8#) *</text></g>
<path d="M735.5 44.7l3 3m0 -3l-3 3" stroke="#cfcfcf" stroke-width="0.8"/>
<path d="M4.4 40.2L5.8 41.6L4.4 43M6.8 40.2L8.2 41.6L6.8 43" fill="none" stroke="#d0d0d0" stroke-width="0.6"/>
<path d="M8 48.5H16" stroke="#484848" stroke-width="1.2" stroke-dasharray="0.8 0.8"/>
<path d="M823.4 40.2L822 41.6L823.4 43M825.8 40.2L824.4 41.6L825.8 43" fill="none" stroke="#d0d0d0" stroke-width="0.6"/>
<path d="M1016.4 40.2L1017.8 41.6L1016.4 43M1018.8 40.2L1020.2 41.6L1018.8 43" fill="none" stroke="#d0d0d0" stroke-width="0.6"/>
<path d="M794 47.5H806" stroke="#484848" stroke-width="1.2" stroke-dasharray="0.8 0.8"/>
<rect x="779.2" y="54" width="2.6" height="9.6" fill="none" stroke="#e0e0e0" stroke-width="0.8"/><path d="M779.2 56.4H781.8M779.2 58.8H781.8M779.2 61.2H781.8" stroke="#e0e0e0" stroke-width="0.5"/><rect x="779.6" y="61" width="1.8" height="2.4" fill="#e0e0e0"/>
<path d="M784.4 55.4C787.6 54.4 788.8 58.6 786 62.4" fill="none" stroke="#e0e0e0" stroke-width="1.1"/><path d="M783.4 54.2L786.6 54.8L784.6 57.2Z" fill="#e0e0e0"/>
<g transform="translate(795.00 62.00) scale(0.8888 1)" fill="#e0e0e0"><text x="0.00" y="0" font-family="'Liberation Sans', 'Noto Sans CJK SC', sans-serif" font-size="7.6">历史记</text><text x="22.80" y="0" font-family="Liberation Sans, sans-serif" font-size="7.07" xml:space="preserve">...</text></g>
<path d="M779.2 71.4H788.2V77.6H783L781 79.6V77.6H779.2Z" fill="#e0e0e0"/>
<g transform="translate(795.00 78.60) scale(0.8882 1)" fill="#e0e0e0"><text x="0.00" y="0" font-family="'Liberation Sans', 'Noto Sans CJK SC', sans-serif" font-size="7.6">注释</text></g>
<rect x="831" y="45" width="23.299999999999955" height="17.2" fill="#535353"/>
<g transform="translate(835.55 55.90) scale(1.0000 1)" fill="#f0f0f0"><text x="0.00" y="0" font-family="'Liberation Sans', 'Noto Sans CJK SC', sans-serif" font-size="7.1" font-weight="bold">颜色</text></g>
<rect x="854.3" y="45" width="23.5" height="16.6" fill="#4a4a4a"/>
<path d="M877.8 45V61.6" stroke="#404040" stroke-width="0.8"/>
<g transform="translate(858.95 55.90) scale(1.0000 1)" fill="#b0b0b0"><text x="0.00" y="0" font-family="'Liberation Sans', 'Noto Sans CJK SC', sans-serif" font-size="7.1">色板</text></g>
<rect x="877.8" y="45" width="23.700000000000045" height="16.6" fill="#4a4a4a"/>
<path d="M901.5 45V61.6" stroke="#404040" stroke-width="0.8"/>
<g transform="translate(882.55 55.90) scale(1.0000 1)" fill="#b0b0b0"><text x="0.00" y="0" font-family="'Liberation Sans', 'Noto Sans CJK SC', sans-serif" font-size="7.1">渐变</text></g>
<rect x="901.5" y="45" width="23.5" height="16.6" fill="#4a4a4a"/>
<path d="M925 45V61.6" stroke="#404040" stroke-width="0.8"/>
<g transform="translate(906.15 55.90) scale(1.0000 1)" fill="#b0b0b0"><text x="0.00" y="0" font-family="'Liberation Sans', 'Noto Sans CJK SC', sans-serif" font-size="7.1">图案</text></g>
<path d="M1014 51.6H1020M1014 53.2H1020M1014 54.8H1020" stroke="#b8b8b8" stroke-width="1"/>
<rect x="843" y="74.8" width="10.4" height="11" fill="#ffffff" stroke="#2a2a2a" stroke-width="0.5"/>
<rect x="836.9" y="68.8" width="10.8" height="11.2" fill="#000" stroke="#e8e8e8" stroke-width="0.9"/>
<rect x="837.7" y="69.6" width="9.2" height="9.6" fill="none" stroke="#1a1a1a" stroke-width="0.6"/>
<defs><linearGradient id="gS" x1="0" x2="1" y1="0" y2="0"><stop offset="0" stop-color="#fff"/><stop offset="1" stop-color="#f00"/></linearGradient><linearGradient id="gV" x1="0" x2="0" y1="0" y2="1"><stop offset="0" stop-color="#000" stop-opacity="0"/><stop offset="1" stop-color="#000"/></linearGradient><linearGradient id="gH" x1="0" x2="0" y1="0" y2="1"><stop offset="0" stop-color="#f00"/><stop offset="0.1667" stop-color="#f0f"/><stop offset="0.3333" stop-color="#00f"/><stop offset="0.5" stop-color="#0ff"/><stop offset="0.6667" stop-color="#0f0"/><stop offset="0.8333" stop-color="#ff0"/><stop offset="1" stop-color="#f00"/></linearGradient></defs>
<rect x="857" y="66" width="135" height="168" fill="url(#gS)"/><rect x="857" y="66" width="135" height="168" fill="url(#gV)"/>
<rect x="1002" y="66" width="12" height="168" fill="url(#gH)"/>
<circle cx="858.4" cy="231.4" r="2.6" fill="none" stroke="#e0e0e0" stroke-width="0.7"/>
<path d="M997.4 231.4V236.4L1001 233.9Z" fill="#e8e8e8"/>
<rect x="831" y="248" width="23.299999999999955" height="16.6" fill="#4a4a4a"/>
<path d="M854.3 248V264.6" stroke="#404040" stroke-width="0.8"/>
<g transform="translate(835.55 258.90) scale(1.0000 1)" fill="#b0b0b0"><text x="0.00" y="0" font-family="'Liberation Sans', 'Noto Sans CJK SC', sans-serif" font-size="7.1">属性</text></g>
<rect x="854.3" y="248" width="23.700000000000045" height="16.6" fill="#4a4a4a"/>
<path d="M878 248V264.6" stroke="#404040" stroke-width="0.8"/>
<g transform="translate(859.05 258.90) scale(1.0000 1)" fill="#b0b0b0"><text x="0.00" y="0" font-family="'Liberation Sans', 'Noto Sans CJK SC', sans-serif" font-size="7.1">调整</text></g>
<rect x="878" y="248" width="23.5" height="16.6" fill="#4a4a4a"/>
<path d="M901.5 248V264.6" stroke="#404040" stroke-width="0.8"/>
<g transform="translate(883.60 258.90) scale(1.0000 1)" fill="#b0b0b0"><text x="0.00" y="0" font-family="'Liberation Sans', 'Noto Sans CJK SC', sans-serif" font-size="7.1">库</text></g>
<rect x="901.5" y="248" width="23.0" height="17.2" fill="#535353"/>
<g transform="translate(905.90 258.90) scale(1.0000 1)" fill="#f0f0f0"><text x="0.00" y="0" font-family="'Liberation Sans', 'Noto Sans CJK SC', sans-serif" font-size="7.1" font-weight="bold">图层</text></g>
<rect x="924.5" y="248" width="23.5" height="16.6" fill="#4a4a4a"/>
<path d="M948 248V264.6" stroke="#404040" stroke-width="0.8"/>
<g transform="translate(929.15 258.90) scale(1.0000 1)" fill="#b0b0b0"><text x="0.00" y="0" font-family="'Liberation Sans', 'Noto Sans CJK SC', sans-serif" font-size="7.1">通道</text></g>
<rect x="948" y="248" width="23.5" height="16.6" fill="#4a4a4a"/>
<path d="M971.5 248V264.6" stroke="#404040" stroke-width="0.8"/>
<g transform="translate(952.65 258.90) scale(1.0000 1)" fill="#b0b0b0"><text x="0.00" y="0" font-family="'Liberation Sans', 'Noto Sans CJK SC', sans-serif" font-size="7.1">路径</text></g>
<path d="M1014 254.6H1020M1014 256.2H1020M1014 257.8H1020" stroke="#b8b8b8" stroke-width="1"/>
<rect x="833" y="271" width="50" height="11.6" rx="1" fill="#454545"/>
<circle cx="839.4" cy="276.2" r="2" fill="none" stroke="#e0e0e0" stroke-width="0.9"/><path d="M840.8 277.8L842.8 279.8" stroke="#e0e0e0" stroke-width="1"/>
<g transform="translate(845.60 279.60) scale(0.9295 1)" fill="#e6e6e6"><text x="0.00" y="0" font-family="'Liberation Sans', 'Noto Sans CJK SC', sans-serif" font-size="7.8">类型</text></g>
<path d="M877.6 276.70000000000005L879.4 278.5L881.1999999999999 276.70000000000005" fill="none" stroke="#bdbdbd" stroke-width="0.8"/>
<rect x="894.6" y="273.2" width="7" height="6.4" fill="none" stroke="#e0e0e0" stroke-width="0.9"/><path d="M895.4 278.6L897.2 276.2L898.6 277.6L899.6 276.8L900.8 278.6Z" fill="#e0e0e0"/>
<circle cx="911.4" cy="276.2" r="3.3" fill="none" stroke="#e0e0e0" stroke-width="0.9"/><path d="M909 278.6A3.3 3.3 0 0 0 913.8 273.8Z" fill="#e0e0e0"/>
<g transform="translate(922.80 280.20) scale(1.0000 1)" fill="#e6e6e6"><text x="0.00" y="0" font-family="Liberation Serif, sans-serif" font-size="8.37" font-weight="bold" xml:space="preserve">T</text></g>
<rect x="937.6" y="273.4" width="5.6" height="5.6" fill="none" stroke="#e0e0e0" stroke-width="0.9"/><path d="M936.2 273.4H938M943 273.4H944.6M936.2 279H938M943 279H944.6M937.6 272V273.6M943.2 272V273.6M937.6 278.8V280.4M943.2 278.8V280.4" stroke="#e0e0e0" stroke-width="0.8"/>
<path d="M952.4 273.2H956.4L958 274.8V279.8H952.4Z" fill="#e0e0e0"/><rect x="953.2" y="276.6" width="3" height="2.6" fill="#535353"/><path d="M953.8 276.6V275.6C953.8 274.6 955.6 274.6 955.6 275.6V276.6" fill="none" stroke="#535353" stroke-width="0.6"/>
<rect x="969.2" y="271.2" width="4.6" height="9.6" rx="2.3" fill="#3c3c3c"/><circle cx="971.5" cy="273.4" r="2.3" fill="#e8e8e8"/>
<rect x="833" y="289" width="69.4" height="11" rx="1" fill="#454545"/>
<g transform="translate(838.00 297.60) scale(0.9295 1)" fill="#e6e6e6"><text x="0.00" y="0" font-family="'Liberation Sans', 'Noto Sans CJK SC', sans-serif" font-size="7.8">正常</text></g>
<path d="M896.8000000000001 294.1L898.6 295.9L900.4 294.1" fill="none" stroke="#bdbdbd" stroke-width="0.8"/>
<g transform="translate(907.60 297.40) scale(0.9182 1)" fill="#b8b8b8"><text x="0.00" y="0" font-family="'Liberation Sans', 'Noto Sans CJK SC', sans-serif" font-size="7.8">不透明度</text><text x="31.20" y="0" font-family="Liberation Sans, sans-serif" font-size="7.25" xml:space="preserve">:</text></g>
<rect x="941.8" y="289.2" width="21.8" height="10.6" fill="#3f3f3f" stroke="#616161" stroke-width="0.6"/>
<g transform="translate(943.40 296.60) scale(0.9183 1)" fill="#e8e8e8"><text x="0.00" y="0" font-family="Liberation Sans, sans-serif" font-size="7.07" xml:space="preserve">100%</text></g>
<rect x="964.3999999999999" y="289.2" width="8" height="10.6" fill="#3f3f3f" stroke="#616161" stroke-width="0.6"/>
<path d="M966.5999999999999 294.0L968.3999999999999 295.79999999999995L970.1999999999998 294.0" fill="none" stroke="#bdbdbd" stroke-width="0.8"/>
<g transform="translate(834.00 314.40) scale(0.9651 1)" fill="#b8b8b8"><text x="0.00" y="0" font-family="'Liberation Sans', 'Noto Sans CJK SC', sans-serif" font-size="7.8">锁定</text><text x="15.60" y="0" font-family="Liberation Sans, sans-serif" font-size="7.25" xml:space="preserve">:</text></g>
<rect x="857.2" y="307.4" width="6.4" height="6.4" fill="none" stroke="#e0e0e0" stroke-width="0.8"/><path d="M857.2 307.4h2.1v2.1h-2.1zM861.4 307.4h2.1v2.1h-2.1zM859.3 309.5h2.1v2.1h-2.1zM857.2 311.6h2.1v2.1h-2.1zM861.4 311.6h2.1v2.1h-2.1z" fill="#e0e0e0"/>
<path d="M877 306.4L877.9 307.1L873.6 312.2L872.5 311.4Z" fill="#e6e6e6"/><path d="M872.1 311.8L873.2 312.7C873 314 871.4 314.8 870 314.2C870.9 313.7 871 312.5 872.1 311.8Z" fill="#e6e6e6"/>
<path d="M886.4 306.6V314.6M882.4 310.6H890.4" stroke="#e0e0e0" stroke-width="0.9"/><path d="M886.4 305.6L887.8 307.4H885ZM886.4 315.6L887.8 313.8H885ZM881.4 310.6L883.2 309.2V312ZM891.4 310.6L889.6 309.2V312Z" fill="#e0e0e0"/>
<rect x="896.6" y="308.2" width="5" height="5" fill="none" stroke="#e0e0e0" stroke-width="0.8"/><path d="M895 308.2H896.8M901.4 308.2H903.6M896.6 306.8V308.4M901.6 313V315" stroke="#e0e0e0" stroke-width="0.8"/><path d="M901.6 306.6L903.4 308.2" stroke="#e0e0e0" stroke-width="0.7"/>
<rect x="910.4" y="309.6" width="6" height="4.8" rx="0.6" fill="#e0e0e0"/><path d="M911.6 309.8V308.4C911.6 306.4 915.2 306.4 915.2 308.4V309.8" fill="none" stroke="#e0e0e0" stroke-width="0.9"/><rect x="913" y="311" width="0.9" height="1.8" fill="#535353"/>
<g transform="translate(922.00 314.40) scale(0.9367 1)" fill="#b8b8b8"><text x="0.00" y="0" font-family="'Liberation Sans', 'Noto Sans CJK SC', sans-serif" font-size="7.8">填充</text><text x="15.60" y="0" font-family="Liberation Sans, sans-serif" font-size="7.25" xml:space="preserve">:</text></g>
<rect x="941.8" y="306.2" width="21.8" height="10.6" fill="#3f3f3f" stroke="#616161" stroke-width="0.6"/>
<g transform="translate(943.40 313.60) scale(0.9183 1)" fill="#e8e8e8"><text x="0.00" y="0" font-family="Liberation Sans, sans-serif" font-size="7.07" xml:space="preserve">100%</text></g>
<rect x="964.3999999999999" y="306.2" width="8" height="10.6" fill="#3f3f3f" stroke="#616161" stroke-width="0.6"/>
<path d="M966.5999999999999 311.0L968.3999999999999 312.79999999999995L970.1999999999998 311.0" fill="none" stroke="#bdbdbd" stroke-width="0.8"/>
<rect x="831" y="321.8" width="182.6" height="15.2" fill="#424242"/>
<rect x="831" y="337.6" width="17.6" height="15.2" fill="#535353"/>
<rect x="849" y="337.6" width="164.6" height="15.2" fill="#696969"/>
<rect x="831" y="353.6" width="17.6" height="16.6" fill="#535353"/>
<rect x="849" y="353.6" width="164.6" height="16.6" fill="#535353"/>
<path d="M836.0 329.2C837.5999999999999 326.0 842.0 326.0 843.5999999999999 329.2C842.0 332.4 837.5999999999999 332.4 836.0 329.2Z" fill="#e6e6e6"/><circle cx="839.8" cy="329.2" r="1.7" fill="#3a3a3a"/><circle cx="839.8" cy="329.2" r="0.8" fill="#e6e6e6"/>
<path d="M836.0 346.2C837.5999999999999 343.0 842.0 343.0 843.5999999999999 346.2C842.0 349.4 837.5999999999999 349.4 836.0 346.2Z" fill="#e6e6e6"/><circle cx="839.8" cy="346.2" r="1.7" fill="#3a3a3a"/><circle cx="839.8" cy="346.2" r="0.8" fill="#e6e6e6"/>
<path d="M836.0 363C837.5999999999999 359.8 842.0 359.8 843.5999999999999 363C842.0 366.2 837.5999999999999 366.2 836.0 363Z" fill="#e6e6e6"/><circle cx="839.8" cy="363" r="1.7" fill="#3a3a3a"/><circle cx="839.8" cy="363" r="0.8" fill="#e6e6e6"/>
<path d="M851.2 328.0L853.2 330.0L855.2 328.0" fill="none" stroke="#b0b0b0" stroke-width="0.7"/>
<g transform="translate(862.60 332.40) scale(0.9481 1)" fill="#f2f2f2"><text x="0.00" y="0" font-family="'Liberation Sans', 'Noto Sans CJK SC', sans-serif" font-size="7.6" font-weight="bold">画板</text><text x="15.20" y="0" font-family="Liberation Sans, sans-serif" font-size="7.07" font-weight="bold" xml:space="preserve"> 1</text></g>
<defs><pattern id="chk" width="2" height="2" patternUnits="userSpaceOnUse"><rect width="2" height="2" fill="#fff"/><rect width="1" height="1" fill="#d0d0d0"/><rect x="1" y="1" width="1" height="1" fill="#d0d0d0"/></pattern></defs>
<rect x="859.6" y="338.4" width="21" height="13.6" fill="#333" stroke="#e6e6e6" stroke-width="0.7"/><rect x="861" y="340" width="18.2" height="10.4" fill="url(#chk)"/>
<path d="M862 346L866 343L870 347L874 342L878 345M863 349H877M865 341L867 349M872 341V349" stroke="#9a9a9a" stroke-width="0.6" fill="none" opacity="0.8"/>
<rect x="861" y="357.4" width="18.2" height="10.4" fill="url(#chk)"/>
<g transform="translate(886.20 349.20) scale(0.9197 1)" fill="#e8e8e8"><text x="0.00" y="0" font-family="'Liberation Sans', 'Noto Sans CJK SC', sans-serif" font-size="7.6">图层</text><text x="15.20" y="0" font-family="Liberation Sans, sans-serif" font-size="7.07" xml:space="preserve"> 2</text></g>
<g transform="translate(886.20 366.00) scale(0.9197 1)" fill="#e8e8e8"><text x="0.00" y="0" font-family="'Liberation Sans', 'Noto Sans CJK SC', sans-serif" font-size="7.6">图层</text><text x="15.20" y="0" font-family="Liberation Sans, sans-serif" font-size="7.07" xml:space="preserve"> 1</text></g>
<rect x="901.8" y="537" width="4" height="3.2" rx="1.6" fill="none" stroke="#8a8a8a" stroke-width="0.8"/><rect x="904.6" y="537" width="4" height="3.2" rx="1.6" fill="none" stroke="#8a8a8a" stroke-width="0.8"/>
<g transform="translate(918.60 541.80) scale(1.0000 1)" fill="#e6e6e6"><text x="0.00" y="0" font-family="Liberation Sans, sans-serif" font-size="7.44" font-style="italic" xml:space="preserve">fx</text></g>
<path d="M925.2 541.4h1.8l-0.9 1Z" fill="#e0e0e0"/>
<rect x="934.4" y="535.6" width="7.4" height="6" fill="#e0e0e0"/><circle cx="938.1" cy="538.6" r="1.8" fill="#4b4b4b"/>
<circle cx="953.8" cy="538.4" r="3.1" fill="none" stroke="#e0e0e0" stroke-width="0.9"/><path d="M951.6 540.6A3.1 3.1 0 0 0 956 536.2Z" fill="#e0e0e0"/><path d="M957.4 541.4h1.8l-0.9 1Z" fill="#e0e0e0"/>
<path d="M966.6 535.8H969.4L970.2 536.6H973.8V541.6H966.6Z" fill="#e0e0e0"/>
<rect x="983.6" y="535.4" width="6" height="6" fill="none" stroke="#e0e0e0" stroke-width="0.9"/><path d="M986.6 537V539.8M985.2 538.4H988" stroke="#e0e0e0" stroke-width="0.8"/>
<path d="M1000.4 536.8H1005L1004.6 542.2H1000.8Z" fill="#c8c8c8"/><path d="M999.8 536.2H1005.6M1001.8 535.4H1003.6" stroke="#c8c8c8" stroke-width="0.8"/>
<g transform="translate(27.00 545.40) scale(1.0429 1)" fill="#f0f0f0"><text x="0.00" y="0" font-family="Liberation Sans, sans-serif" font-size="7.07" xml:space="preserve">68.18%</text></g>
<path d="M54.5 538V547" stroke="#3a3a3a" stroke-width="1"/>
<g transform="translate(58.50 545.20) scale(0.9953 1)" fill="#c8c8c8"><text x="0.00" y="0" font-family="Liberation Sans, sans-serif" font-size="6.70" xml:space="preserve">2560 </text><text x="16.76" y="0" font-family="'Liberation Sans', 'Noto Sans CJK SC', sans-serif" font-size="7.2">像素</text><text x="31.16" y="0" font-family="Liberation Sans, sans-serif" font-size="6.70" xml:space="preserve"> x 1440 </text><text x="54.98" y="0" font-family="'Liberation Sans', 'Noto Sans CJK SC', sans-serif" font-size="7.2">像素</text><text x="69.38" y="0" font-family="Liberation Sans, sans-serif" font-size="6.70" xml:space="preserve"> (72 ppi)</text></g>
<path d="M158.6 540.4L160.2 542L158.6 543.6" fill="none" stroke="#b0b0b0" stroke-width="0.7"/>
<path d="M171.2 540.4L169.6 542L171.2 543.6" fill="none" stroke="#8a8a8a" stroke-width="0.7"/>
<path d="M754.2 540.4L755.8 542L754.2 543.6" fill="none" stroke="#8a8a8a" stroke-width="0.7"/>
<path d="M764.4 530.2L766 531.8L767.6 530.2" fill="none" stroke="#8a8a8a" stroke-width="0.7"/>
<path d="M764.4 62.8L766 61.2L767.6 62.8" fill="none" stroke="#8a8a8a" stroke-width="0.7"/>
<g transform="translate(51.80 108.20) scale(0.9515 1)" fill="#e8e8e8"><text x="0.00" y="0" font-family="'Liberation Serif', 'Noto Serif CJK SC', serif" font-size="7.8" font-weight="bold">画板</text><text x="15.60" y="0" font-family="Liberation Serif, sans-serif" font-size="7.25" font-weight="bold" xml:space="preserve"> 1</text></g>
<rect x="3" y="181.50" width="18" height="13.8" fill="#333333"/>
<g transform="translate(11.60 63.60) scale(0.84)"><path d="M0 -4.6V4.6M-4.6 0H4.6" stroke="#dedede" stroke-width="0.9"/><path d="M0 -5.6L1.7 -3.4H-1.7ZM0 5.6L1.7 3.4H-1.7ZM-5.6 0L-3.4 -1.7V1.7ZM5.6 0L3.4 -1.7V1.7Z" fill="#dedede"/></g>
<path d="M19.00 67.20V69.00H17.20Z" fill="#c8c8c8"/>
<g transform="translate(11.60 79.20) scale(0.84)"><rect x="-4.8" y="-3.9" width="9.6" height="7.8" fill="none" stroke="#dedede" stroke-width="0.9" stroke-dasharray="2 1.2"/></g>
<path d="M19.00 82.80V84.60H17.20Z" fill="#c8c8c8"/>
<g transform="translate(11.60 94.80) scale(0.84)"><circle cx="-0.8" cy="0.6" r="4.1" fill="none" stroke="#dedede" stroke-width="0.8" stroke-dasharray="1.4 1"/><path d="M4.6 -4.8L5.6 -4L1 1.6L-0.2 0.6Z" fill="#dedede"/><path d="M-0.6 1L0.6 2C0.3 3.5 -1.6 4.3 -3.2 3.6C-2.2 3 -2 1.7 -0.6 1Z" fill="#dedede"/><circle cx="-2.2" cy="-0.6" r="1.7" fill="#dedede" opacity="0.75"/></g>
<path d="M19.00 98.40V100.20H17.20Z" fill="#c8c8c8"/>
<g transform="translate(11.60 110.40) scale(0.84)"><path d="M-4.6 3.6L-3.4 4.8L1.6 -0.2L0.4 -1.4Z" fill="#dedede"/><path d="M1 -2L2.2 -0.8L3.2 -1.8L2 -3Z" fill="#dedede"/><path d="M3.6 -5.2V-3.4M4.9 -1.6H6M4.6 -4.4L5.4 -5.2M0.6 -4.6L1.2 -4M4.4 0.6L5 1.2" stroke="#dedede" stroke-width="0.8"/></g>
<path d="M19.00 114.00V115.80H17.20Z" fill="#c8c8c8"/>
<g transform="translate(11.60 126.00) scale(0.84)"><path d="M-2.8 -5.4V2.8H5.4M-5.4 -2.8H2.8V5.4" fill="none" stroke="#dedede" stroke-width="1.1"/><path d="M-5.6 -4.8H-4M-4.8 -5.6V-4" stroke="#dedede" stroke-width="0.6"/></g>
<path d="M19.00 129.60V131.40H17.20Z" fill="#c8c8c8"/>
<g transform="translate(11.60 141.60) scale(0.84)"><rect x="-4.8" y="-3.8" width="9.6" height="7.6" fill="none" stroke="#dedede" stroke-width="0.9"/><path d="M-4.8 -3.8L4.8 3.8M4.8 -3.8L-4.8 3.8" stroke="#dedede" stroke-width="0.7"/></g>
<g transform="translate(11.60 157.20) scale(0.84)"><path d="M-4.8 4.8L-4.2 2.8L0.2 -1.6L1.6 -0.2L-2.8 4.2Z" fill="none" stroke="#dedede" stroke-width="0.9"/><path d="M0 -2.8L2.8 0L3.6 -0.8L3 -1.6L4.6 -3.2C5.6 -4.4 4.4 -5.6 3.2 -4.6L1.6 -3L0.8 -3.6Z" fill="#dedede"/></g>
<path d="M19.00 160.80V162.60H17.20Z" fill="#c8c8c8"/>
<g transform="translate(11.60 172.80) scale(0.84)"><rect x="-5.6" y="-2.1" width="11.2" height="4.2" rx="2.1" fill="#dedede" transform="rotate(-40)"/><path d="M-1.2 -1.2L1.2 1.2M-1.4 1L1 -1.4" stroke="#535353" stroke-width="0.6" transform="rotate(-40)"/><path d="M-4.6 -0.4C-5.6 -3.6 -2.6 -5.6 0.4 -4.6" fill="none" stroke="#dedede" stroke-width="0.7" stroke-dasharray="1.2 0.9"/></g>
<path d="M19.00 176.40V178.20H17.20Z" fill="#c8c8c8"/>
<g transform="translate(11.60 188.40) scale(0.84)"><path d="M4.2 -5.8L6 -4.3L0.5 2.5L-1.5 0.8Z" fill="#f0f0f0"/><path d="M-2 1.3L0 3C-0.3 5 -3 6 -5.4 5.2C-4 4.4 -3.8 2.4 -2 1.3Z" fill="#f0f0f0"/></g>
<path d="M19.00 192.00V193.80H17.20Z" fill="#c8c8c8"/>
<g transform="translate(11.60 204.00) scale(0.84)"><path d="M-1.9 -3.2C-1.9 -5.6 1.9 -5.6 1.9 -3.2C1.9 -1.8 1 -1.4 1 0H4.4V2.6H-4.4V0H-1C-1 -1.4 -1.9 -1.8 -1.9 -3.2Z" fill="#dedede"/><path d="M-4.4 4.2H4.4" stroke="#dedede" stroke-width="1.1"/></g>
<path d="M19.00 207.60V209.40H17.20Z" fill="#c8c8c8"/>
<g transform="translate(11.60 219.60) scale(0.84)"><path d="M4.6 -5.4L5.6 -4.6L1 1.4L-0.2 0.4Z" fill="#dedede"/><path d="M-0.7 1L0.5 2C0.2 3.6 -1.8 4.6 -3.6 3.8C-2.5 3.2 -2.2 1.8 -0.7 1Z" fill="#dedede"/><path d="M-4.8 -3.2C-2.6 -4.8 0.4 -4 1 -1.6M3.2 1.4C3.2 3 2.2 4.2 1 4.6" fill="none" stroke="#dedede" stroke-width="0.8"/><path d="M-5.6 -4.6L-3 -4.4L-4.6 -2Z" fill="#dedede"/></g>
<path d="M19.00 223.20V225.00H17.20Z" fill="#c8c8c8"/>
<g transform="translate(11.60 235.20) scale(0.84)"><path d="M-4.6 1.4L0.8 -4.2L4.6 -1.6L-0.2 4H-2.8Z" fill="none" stroke="#dedede" stroke-width="0.9"/><path d="M-1 -2.4L0.8 -4.2L4.6 -1.6L2.6 0.6Z" fill="#dedede"/><path d="M-0.4 4H5" stroke="#dedede" stroke-width="0.9"/></g>
<path d="M19.00 238.80V240.60H17.20Z" fill="#c8c8c8"/>
<g transform="translate(11.60 250.80) scale(0.84)"><path d="M-4.8 0.2L-0.6 -4L3.4 0L-0.8 4.2Z" fill="none" stroke="#dedede" stroke-width="0.95"/><path d="M-2.6 -3.6C-2.8 -5.8 0.2 -5.8 0.2 -3.4" fill="none" stroke="#dedede" stroke-width="0.8"/><path d="M3.2 0.4C4.6 1.6 5.4 3 4.8 4.2C4.2 5 3.2 4.6 3.2 3.6Z" fill="#dedede"/><path d="M-0.4 -3.8L3.2 -0.2L3.4 1.2" fill="none" stroke="#dedede" stroke-width="0.9"/></g>
<path d="M19.00 254.40V256.20H17.20Z" fill="#c8c8c8"/>
<g transform="translate(11.60 266.40) scale(0.84)"><path d="M0 -5.2C2 -2.4 3.5 -0.6 3.5 1.5C3.5 3.6 2 5 0 5C-2 5 -3.5 3.6 -3.5 1.5C-3.5 -0.6 -2 -2.4 0 -5.2Z" fill="#dedede"/></g>
<path d="M19.00 270.00V271.80H17.20Z" fill="#c8c8c8"/>
<g transform="translate(11.60 282.00) scale(0.84)"><path d="M2.4 -5.6L3.6 -4.8L-1 1.4L-2.2 0.4Z" fill="#dedede"/><path d="M-2.7 1L-1.5 2C-1.8 3.6 -3.6 4.6 -5.2 3.8C-4.2 3.2 -4 1.8 -2.7 1Z" fill="#dedede"/><circle cx="2.6" cy="2.8" r="2.3" fill="none" stroke="#dedede" stroke-width="0.9"/><path d="M1 4.4A2.3 2.3 0 0 0 4.2 1.2Z" fill="#dedede"/></g>
<g transform="translate(11.60 297.60) scale(0.84)"><circle cx="1.6" cy="-1.8" r="3.3" fill="#dedede"/><path d="M-0.6 0.4L-4.8 4.8" stroke="#dedede" stroke-width="1.3"/></g>
<path d="M19.00 301.20V303.00H17.20Z" fill="#c8c8c8"/>
<g transform="translate(11.60 313.20) scale(0.84)"><path d="M-5 5L-3.8 0.2L1.2 -3.6L4 -0.8L0.2 4.2Z" fill="none" stroke="#dedede" stroke-width="0.9"/><path d="M-5 5L-1.2 1.2" stroke="#dedede" stroke-width="0.7"/><circle cx="-0.8" cy="0.8" r="0.9" fill="#dedede"/><path d="M1.6 -4.8L5.2 -1.2L4.2 -0.4L0.8 -3.8Z" fill="#dedede"/></g>
<path d="M19.00 316.80V318.60H17.20Z" fill="#c8c8c8"/>
<g transform="translate(11.60 328.80) scale(0.84)"><path d="M-4 -4.6H4V-2.4H3.2L2.9 -3.5H0.7V3.6L1.9 3.9V4.6H-1.9V3.9L-0.7 3.6V-3.5H-2.9L-3.2 -2.4H-4Z" fill="#dedede"/></g>
<path d="M19.00 332.40V334.20H17.20Z" fill="#c8c8c8"/>
<g transform="translate(11.60 344.40) scale(0.84)"><path d="M-2.6 -5.4L3.6 1L0.6 1.2L2.4 4.8L1 5.4L-0.8 1.8L-2.6 3.6Z" fill="#dedede"/></g>
<path d="M19.00 348.00V349.80H17.20Z" fill="#c8c8c8"/>
<g transform="translate(11.60 360.00) scale(0.84)"><rect x="-4.9" y="-3.6" width="9.8" height="7.2" fill="#7a7a7a" stroke="#dedede" stroke-width="0.9"/></g>
<path d="M19.00 363.60V365.40H17.20Z" fill="#c8c8c8"/>
<g transform="translate(11.60 375.60) scale(0.84)"><path d="M-2.6 0.2V-3.4C-2.6 -4.4 -1.4 -4.4 -1.4 -3.4V-4.6C-1.4 -5.6 -0.1 -5.6 -0.1 -4.6V-4.2C-0.1 -5.2 1.2 -5.2 1.2 -4.2V-3.4C1.2 -4.4 2.5 -4.4 2.5 -3.4V1.6C2.5 3.8 1.4 5.2 -0.6 5.2C-2.2 5.2 -3 4.4 -3.8 3L-5.2 0.4C-5.6 -0.6 -4.4 -1.2 -3.8 -0.4Z" fill="#dedede"/><path d="M-1.4 -3.2V-0.4M-0.1 -4V-0.6M1.2 -3.4V-0.4" stroke="#535353" stroke-width="0.35"/></g>
<path d="M19.00 379.20V381.00H17.20Z" fill="#c8c8c8"/>
<g transform="translate(11.60 391.20) scale(0.84)"><circle cx="-1.2" cy="-1.2" r="3.4" fill="none" stroke="#dedede" stroke-width="1"/><path d="M1.4 1.4L4.8 4.8" stroke="#dedede" stroke-width="1.3"/></g>
<g transform="translate(11.60 406.80) scale(0.84)"><circle cx="-4.2" cy="0" r="1.3" fill="#dedede"/><circle cx="0" cy="0" r="1.3" fill="#dedede"/><circle cx="4.2" cy="0" r="1.3" fill="#dedede"/></g>
<path d="M19.00 410.40V412.20H17.20Z" fill="#c8c8c8"/>
<rect x="5" y="418.6" width="4" height="4" fill="#fff" stroke="#222" stroke-width="0.4"/><rect x="2.8" y="416.4" width="4" height="4" fill="#111" stroke="#dedede" stroke-width="0.6"/>
<path d="M14.2 417.8C16.6 417.4 18.2 418.8 18.2 421.4" fill="none" stroke="#dedede" stroke-width="0.9"/><path d="M14.8 416.2L13.2 417.9L15.2 419.2Z" fill="#dedede"/><path d="M16.8 420.8L18.2 422.8L19.6 420.6Z" fill="#dedede"/>
<rect x="9.6" y="433.2" width="11.2" height="11.2" fill="#ffffff" stroke="#2c2c2c" stroke-width="0.5"/>
<rect x="3.2" y="427.2" width="11.2" height="11.2" fill="#000" stroke="#d8d8d8" stroke-width="0.9"/><rect x="4" y="428" width="9.6" height="9.6" fill="none" stroke="#111" stroke-width="0.6"/>
<rect x="6" y="451" width="11" height="8.2" fill="none" stroke="#dedede" stroke-width="0.9"/><circle cx="11.5" cy="455.1" r="2.5" fill="none" stroke="#dedede" stroke-width="0.6" stroke-dasharray="1 0.7"/>
<rect x="8.6" y="467.4" width="8" height="5.6" fill="none" stroke="#dedede" stroke-width="0.9"/><path d="M8.6 469.4H6V474.8H14V473" fill="none" stroke="#dedede" stroke-width="0.9"/>
<path d="M19.2 476V478H17.2Z" fill="#c8c8c8"/>
<path d="M8 487.2C6.6 487.2 6.4 489.6 7.8 490.2M9.4 486.6C10.4 485.6 12.2 485.8 12.6 487" fill="none" stroke="#dedede" stroke-width="0.8"/><rect x="10.4" y="489.2" width="5.6" height="4.4" fill="none" stroke="#dedede" stroke-width="0.8"/><path d="M11 492.8L12.4 491L13.4 492L14.2 491.4L15.4 492.8Z" fill="#dedede"/><path d="M7.6 490.6L8.6 492.2L9.8 490.8" fill="none" stroke="#dedede" stroke-width="0.7"/>
<circle cx="15.2" cy="485.6" r="1.9" fill="#2d8ceb"/>
</svg>
</body></html>
